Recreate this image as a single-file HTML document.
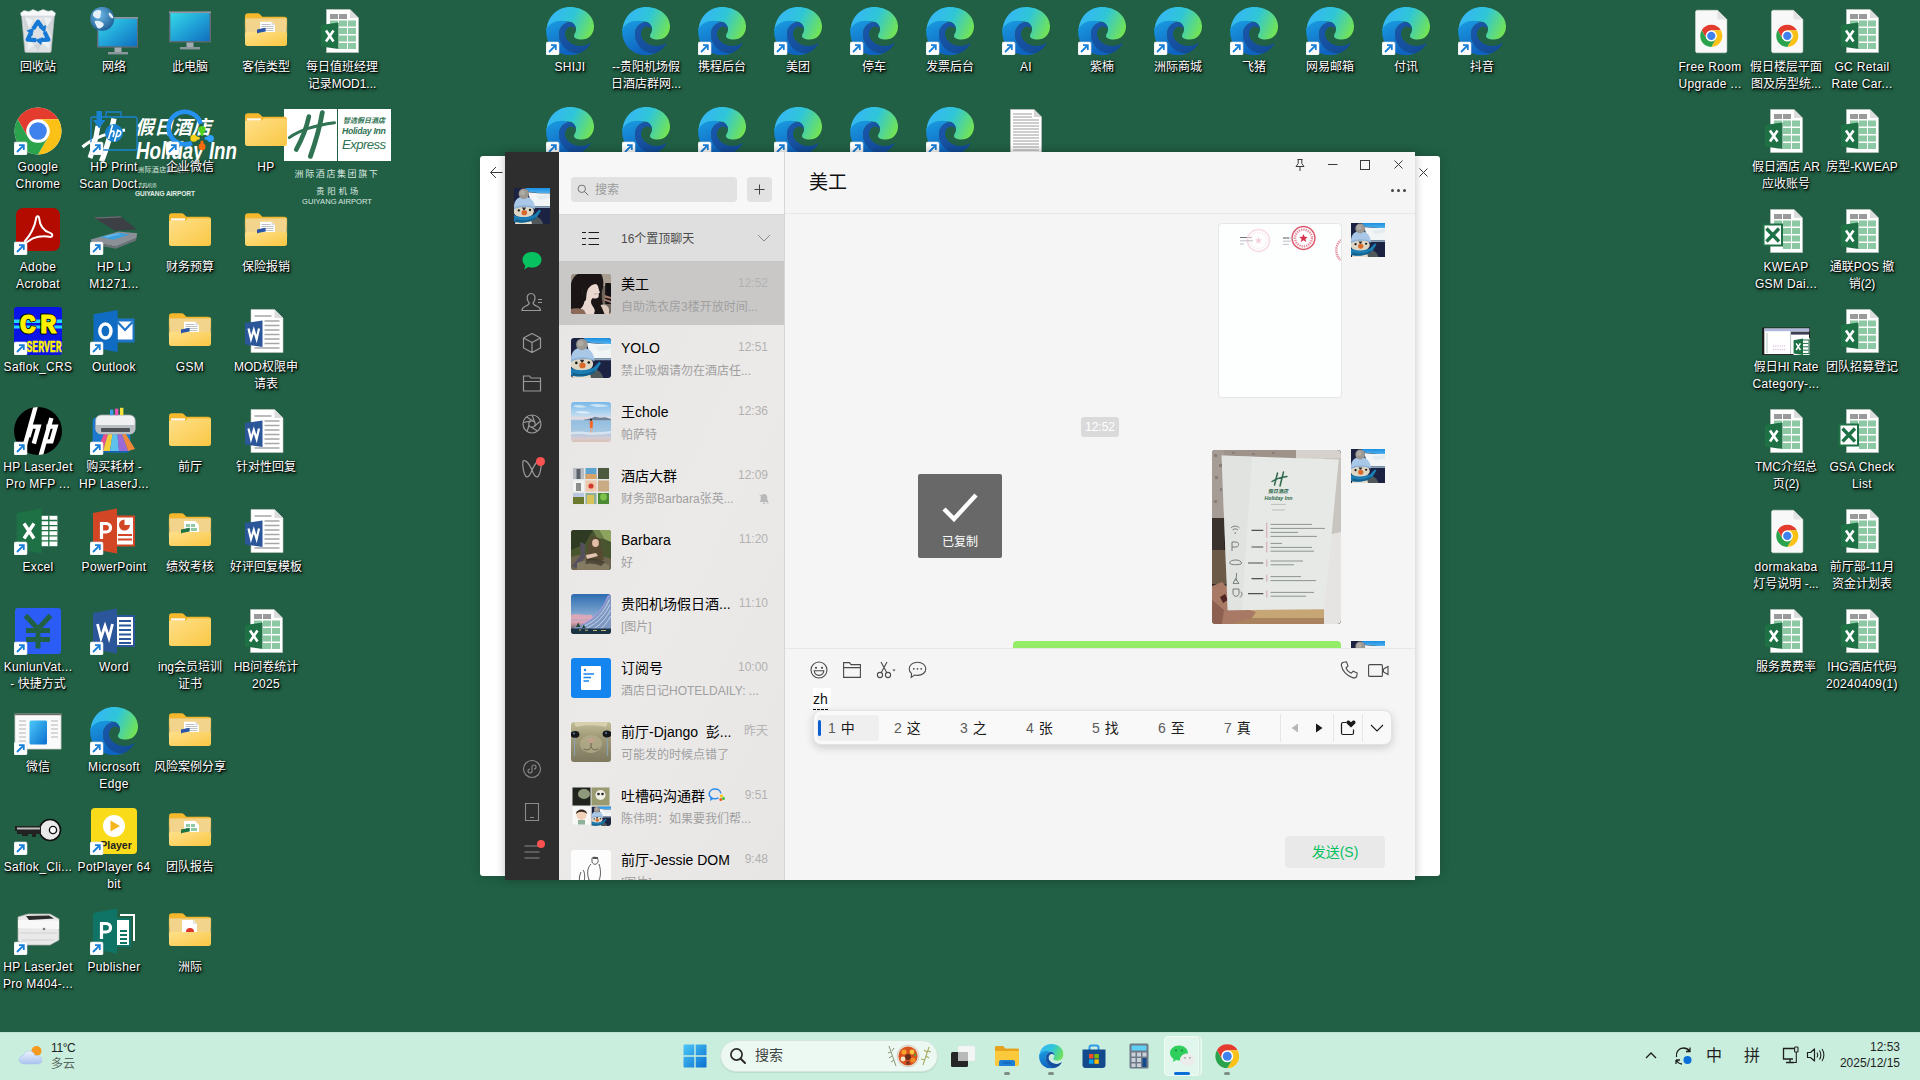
<!DOCTYPE html><html lang="zh-CN"><head><meta charset="utf-8"><title>Desktop</title><style>
*{box-sizing:border-box;margin:0;padding:0}
html,body{width:1920px;height:1080px;overflow:hidden}
body{background:#216045;font-family:"Liberation Sans","Noto Sans CJK SC",sans-serif;position:relative}
.ic{position:absolute;width:76px;height:100px}
.ic svg{position:absolute;left:14px;top:7px;width:48px;height:48px;overflow:visible}
.ic .lb{position:absolute;left:-22px;width:120px;top:59px;text-align:center;color:#fff;font-size:12px;line-height:17px;white-space:nowrap;text-shadow:1px 1px 1px rgba(0,0,0,.9),1px 2px 3px rgba(0,0,0,.85),0 0 3px rgba(0,0,0,.7)}
.abs{position:absolute}
#taskbar{position:absolute;left:0;top:1032px;width:1920px;height:48px;background:#c9eede;box-shadow:inset 0 1px 0 #bfe3d2}
.wp{position:absolute;color:#e9f1ec;white-space:nowrap}
.la{letter-spacing:.35px}

#backwin{position:absolute;left:480px;top:156px;width:960px;height:720px;background:#fff;border-radius:3px;box-shadow:0 0 12px rgba(0,0,0,.2)}
#wx{position:absolute;left:505px;top:152px;width:910px;height:728px;background:#f5f5f5;box-shadow:0 0 9px rgba(0,0,0,.25);overflow:hidden}
#wx .side{position:absolute;left:0;top:0;width:54px;height:728px;background:#2e2e2e}
#wx .list{position:absolute;left:54px;top:0;width:226px;height:728px;background:linear-gradient(115deg,#e6e5e4 0%,#eceae9 55%,#e7e6e5 100%);border-right:1px solid #d6d6d6;overflow:hidden}
#wx .lhead{position:absolute;left:0;top:0;width:225px;height:62px;background:#f7f7f7}
#wx .srch{position:absolute;left:12px;top:25px;width:166px;height:25px;border-radius:4px;background:#e2e2e2}
#wx .plus{position:absolute;left:188px;top:25px;width:25px;height:25px;border-radius:4px;background:#e2e2e2}
#wx .pin{position:absolute;left:0;top:62px;width:225px;height:47px;background:#dfdfdf;border-top:1px solid #d4d4d4}
.row{position:absolute;left:0;width:225px;height:64px}
.row svg.av{position:absolute;left:12px;top:13px;width:40px;height:40px;border-radius:3px}
.row .nm{position:absolute;left:62px;top:12px;font-size:14px;line-height:22px;color:#000;white-space:nowrap}
.row .pv{position:absolute;left:62px;top:36px;font-size:12px;line-height:20px;color:#a0a0a0;white-space:nowrap}
.row .tm{position:absolute;right:16px;top:12px;font-size:12px;line-height:20px;color:#b2b2b2;white-space:nowrap}
#wx .chat{position:absolute;left:280px;top:0;width:630px;height:728px;background:#f5f5f5}
.sico{position:absolute;left:15px;width:24px;height:24px}
.cand{position:absolute;top:7px;font-size:14px;line-height:20px;color:#1a1a1a;white-space:nowrap}
.cand i{font-style:normal;color:#5c5c5c;margin-right:5px}

</style></head><body>
<svg width="0" height="0" style="position:absolute">
<defs>
<linearGradient id="gEdgeTop" x1="0.1" y1="0.3" x2="1" y2="0.6"><stop offset="0" stop-color="#35b8f1"/><stop offset="0.45" stop-color="#2fc6d8"/><stop offset="1" stop-color="#72e356"/></linearGradient>
<linearGradient id="gEdgeMid" x1="0" y1="0" x2="0.4" y2="1"><stop offset="0" stop-color="#1b9de2"/><stop offset="1" stop-color="#0e64c0"/></linearGradient>
<linearGradient id="gEdgeLow" x1="0" y1="0" x2="1" y2="1"><stop offset="0" stop-color="#1a57ad"/><stop offset="1" stop-color="#114a94"/></linearGradient>
<linearGradient id="gFold" x1="0" y1="0" x2="1" y2="1"><stop offset="0" stop-color="#ffe08a"/><stop offset="1" stop-color="#f9c744"/></linearGradient>
<linearGradient id="gMon" x1="0" y1="0" x2="1" y2="1"><stop offset="0" stop-color="#36dbe9"/><stop offset="0.5" stop-color="#21a4d8"/><stop offset="1" stop-color="#0f6cbd"/></linearGradient><radialGradient id="gGlobe" cx="0.4" cy="0.35" r="0.7"><stop offset="0" stop-color="#6db8e4"/><stop offset="1" stop-color="#1d5c96"/></radialGradient>
<linearGradient id="gWin" x1="0" y1="0" x2="1" y2="1"><stop offset="0" stop-color="#4cc8f8"/><stop offset="1" stop-color="#0a6fd0"/></linearGradient>

<symbol id="edge" viewBox="0 0 48 48">
<path fill="url(#gEdgeTop)" d="M0.5 24 C1 10 11 0 24 0 C38 0 48 9 48 19.5 C48 28 42 32.5 35.5 32.5 C31 32.5 28 31 28 29 C28 27 30 26 30 22.5 C30 18 26.5 14.5 22 14.5 C13 14.5 5 18 0.5 24Z"/>
<path fill="url(#gEdgeMid)" d="M0.3 22 C-1 37 10 48 24 48 C28 48 31 47.3 33.5 46.2 C23 46 13 38 13 27 C13 21 17 16.5 22.5 15 C14 11.5 3.5 15 0.3 22Z"/>
<path fill="url(#gEdgeLow)" d="M13 27 C13 40 24 47.5 33.5 46.2 C39 44 43 40 45 35.5 C42 38 38 39 34.5 39 C26 39 19 33 19 27 C19 22.5 22 19.5 25 19.5 C27.5 19.5 29.3 20.7 30 22.5 C30 18 26.5 14.6 22.5 15 C17 16.5 13 21 13 27Z"/>
</symbol>

<symbol id="sc" viewBox="0 0 48 48">
<rect x="0" y="35" width="13" height="13" rx="1.5" fill="#fff" stroke="#d8dde2" stroke-width="0.6"/>
<path d="M3 45 L9.5 38.5 M5 38.2 H9.8 V43" fill="none" stroke="#1a7fd6" stroke-width="1.8"/>
</symbol>

<symbol id="folder" viewBox="0 0 48 48">
<path fill="#f5b72b" d="M3 9 C3 7.2 4.2 6.2 6 6.2 H15 C16.5 6.2 17.3 6.6 18.2 7.6 L20.3 9.8 H42 C44 9.8 45 10.8 45 12.6 V20 H3Z"/>
<rect x="5" y="11.3" width="14" height="2.4" fill="#fff" opacity="0.9"/>
<path fill="url(#gFold)" d="M3 13.8 H19.5 L22 11.4 H43 C44.3 11.4 45 12.2 45 13.4 V36.5 C45 38.2 44 39 42.5 39 H5.5 C4 39 3 38.2 3 36.5Z"/>
</symbol>

<symbol id="folderdoc" viewBox="0 0 48 48">
<path fill="#f5b72b" d="M3 9 C3 7.2 4.2 6.2 6 6.2 H15 C16.5 6.2 17.3 6.6 18.2 7.6 L20.3 9.8 H42 C44 9.8 45 10.8 45 12.6 V20 H3Z"/>
<path fill="#f3d48c" stroke="#e9bf62" stroke-width="0.6" d="M3.3 11.3 H44.7 V30 H3.3Z"/>
<path fill="#fff" d="M18 14.8 H29.5 L33 18.3 V30 H18Z"/><path fill="#d9dde3" d="M29.5 14.8 V18.3 H33Z"/>
<path stroke="#b4bac2" stroke-width="0.9" d="M19.5 17.5H28.5M19.5 19.5H31.5M19.5 21.5H31.5M19.5 23.5H31.5"/>
<path fill="url(#gFold)" d="M3 27 C3 25.8 3.8 25 5 25 H43 C44.2 25 45 25.8 45 27 V36.5 C45 38.2 44 39 42.5 39 H5.5 C4 39 3 38.2 3 36.5Z"/>
<path fill="#2a56a5" d="M15 22.4 L23.6 20.8 V24.6 L17 25.8 L15 26.4Z"/>
</symbol>

<symbol id="folderxls" viewBox="0 0 48 48">
<path fill="#f5b72b" d="M3 9 C3 7.2 4.2 6.2 6 6.2 H15 C16.5 6.2 17.3 6.6 18.2 7.6 L20.3 9.8 H42 C44 9.8 45 10.8 45 12.6 V20 H3Z"/>
<path fill="#f3d48c" stroke="#e9bf62" stroke-width="0.6" d="M3.3 11.3 H44.7 V30 H3.3Z"/>
<path fill="#fff" d="M18 14 H29 L33 18 V30 H18Z"/>
<path fill="#8fcaa4" d="M20 17h4v3h-4zM25 17h4v3h-4zM20 21h4v3h-4zM25 21h6v3h-6z"/>
<path fill="url(#gFold)" d="M3 27 C3 25.8 3.8 25 5 25 H43 C44.2 25 45 25.8 45 27 V36.5 C45 38.2 44 39 42.5 39 H5.5 C4 39 3 38.2 3 36.5Z"/>
<path fill="#1f7244" d="M15 22.4 L23.6 20.8 V24.6 L17 25.8 L15 26.4Z"/>
</symbol>

<symbol id="folderpdf" viewBox="0 0 48 48">
<path fill="#f5b72b" d="M3 9 C3 7.2 4.2 6.2 6 6.2 H15 C16.5 6.2 17.3 6.6 18.2 7.6 L20.3 9.8 H42 C44 9.8 45 10.8 45 12.6 V20 H3Z"/>
<path fill="#f3d48c" stroke="#e9bf62" stroke-width="0.6" d="M3.3 11.3 H44.7 V30 H3.3Z"/>
<path fill="#fff" d="M16 13 H27 L31 17 V30 H16Z"/><path fill="#e3e3e3" d="M27 13 V17 H31Z"/>
<circle cx="24" cy="25" r="4" fill="#e0352b"/>
<path fill="url(#gFold)" d="M3 27 C3 25.8 3.8 25 5 25 H43 C44.2 25 45 25.8 45 27 V36.5 C45 38.2 44 39 42.5 39 H5.5 C4 39 3 38.2 3 36.5Z"/>
</symbol>

<symbol id="xlsx" viewBox="0 0 48 48">
<g transform="translate(-2 0)">
<path fill="#fff" stroke="#c8c8c8" stroke-width="0.6" d="M10.5 2.5 H34 L42.5 11 V45.5 H10.5Z"/>
<path fill="#dcdcdc" d="M34 2.5 V11 H42.5Z"/>
<path fill="#9a9a9a" d="M14 7h8v5h-8zM23 7h8v5h-8z"/>
<path fill="#8dc8a5" d="M14 13.5h8v6h-8zM23 13.5h8v6h-8zM32 13.5h8v6h-8zM23 21h8v6h-8zM32 21h8v6h-8zM23 28.5h8v6h-8zM32 28.5h8v6h-8zM23 36h8v6h-8zM32 36h8v6h-8z"/>
</g>
<path fill="#1e7145" d="M3 18 L20.5 15.5 V42 L3 39.5Z"/>
<path d="M8 23.5 L15.5 34.5 M15.5 23.5 L8 34.5" stroke="#fff" stroke-width="2.6" fill="none"/>
</symbol>

<symbol id="xls" viewBox="0 0 48 48">
<g transform="translate(-2 0)">
<path fill="#fff" stroke="#c8c8c8" stroke-width="0.6" d="M10.5 2.5 H34 L42.5 11 V45.5 H10.5Z"/>
<path fill="#dcdcdc" d="M34 2.5 V11 H42.5Z"/>
<path fill="#9a9a9a" d="M14 7h8v5h-8zM23 7h8v5h-8z"/>
<path fill="#8dc8a5" d="M14 13.5h8v6h-8zM23 13.5h8v6h-8zM32 13.5h8v6h-8zM23 21h8v6h-8zM32 21h8v6h-8zM23 28.5h8v6h-8zM32 28.5h8v6h-8zM23 36h8v6h-8zM32 36h8v6h-8z"/>
</g>
<rect x="1.5" y="17.5" width="18.5" height="21" fill="#fff" stroke="#1e7145" stroke-width="2"/>
<path d="M4.5 21.5 L17 34.5 M17 21.5 L4.5 34.5" stroke="#1e7145" stroke-width="3.4" fill="none"/>
</symbol>

<symbol id="docx" viewBox="0 0 48 48">
<g transform="translate(-1.5 0)">
<path fill="#fff" stroke="#c8c8c8" stroke-width="0.6" d="M10.5 2.5 H34 L42.5 11 V45.5 H10.5Z"/>
<path fill="#dcdcdc" d="M34 2.5 V11 H42.5Z"/>
<path stroke="#a6a6a6" stroke-width="1.6" d="M14 9H31M24 14H39M24 18.5H39M24 23H39M24 27.5H39M24 32H39M24 36.5H39M14 41H39"/>
</g>
<path fill="#2b569a" d="M3 16 L20.5 13.5 V40 L3 37.5Z"/>
<path d="M6.5 21.5 L9 32 L11.8 23 L14.6 32 L17 21.5" stroke="#fff" stroke-width="2.2" fill="none" stroke-linejoin="miter"/>
</symbol>

<symbol id="txt" viewBox="0 0 48 48">
<path fill="#fff" stroke="#bdbdbd" stroke-width="0.8" d="M8.5 2.5 H32 L39.5 10 V45.5 H8.5Z"/>
<path fill="#d4d4d4" d="M32 2.5 V10 H39.5Z"/>
<path stroke="#9c9c9c" stroke-width="1" d="M11 7H30M11 10H30M11 13H37M11 16H37M11 19H37M11 22H37M11 25H37M11 28H37M11 31H37M11 34H37M11 37H37M11 40H37M11 43H37"/>
</symbol>

<symbol id="chrome" viewBox="0 0 48 48">
<circle cx="24" cy="24" r="23.5" fill="#fff"/>
<path fill="#e33b2e" d="M24 0.5 A23.5 23.5 0 0 1 44.35 12.25 H24 A11.75 11.75 0 0 0 13.82 29.9 L3.65 12.25 A23.5 23.5 0 0 1 24 0.5Z"/>
<path fill="#fbc116" d="M44.35 12.25 A23.5 23.5 0 0 1 24 47.5 L34.18 29.9 A11.75 11.75 0 0 0 24 12.25Z"/>
<path fill="#2ba24c" d="M24 47.5 A23.5 23.5 0 0 1 3.65 12.25 L13.82 29.9 A11.75 11.75 0 0 0 34.18 29.9Z"/>
<circle cx="24" cy="24" r="11" fill="#fff"/>
<circle cx="24" cy="24" r="8.8" fill="#3f82ee"/>
</symbol>

<symbol id="chromedoc" viewBox="0 0 48 48">
<g transform="translate(-2.5 0)"><path fill="#f8f8f8" stroke="#dedede" stroke-width="0.5" d="M12 5 C12 4 12.8 3.2 13.8 3.2 H34 L43.4 12.6 V44 C43.4 45 42.6 45.8 41.6 45.8 H13.8 C12.8 45.8 12 45 12 44Z"/>
<path fill="#e2e2e2" d="M34 3.2 V10.8 C34 11.8 34.7 12.6 35.7 12.6 H43.4Z"/></g>
<g transform="translate(14 17.6) scale(0.47)">
<circle cx="24" cy="24" r="23.5" fill="#fff"/>
<path fill="#e33b2e" d="M24 0.5 A23.5 23.5 0 0 1 44.35 12.25 H24 A11.75 11.75 0 0 0 13.82 29.9 L3.65 12.25 A23.5 23.5 0 0 1 24 0.5Z"/>
<path fill="#fbc116" d="M44.35 12.25 A23.5 23.5 0 0 1 24 47.5 L34.18 29.9 A11.75 11.75 0 0 0 24 12.25Z"/>
<path fill="#2ba24c" d="M24 47.5 A23.5 23.5 0 0 1 3.65 12.25 L13.82 29.9 A11.75 11.75 0 0 0 34.18 29.9Z"/>
<circle cx="24" cy="24" r="11" fill="#fff"/>
<circle cx="24" cy="24" r="8.8" fill="#3f82ee"/>
</g>
</symbol>

<symbol id="recycle" viewBox="0 0 48 48">
<path fill="#dde1e4" stroke="#a9b0b6" stroke-width="0.7" d="M7.5 7.5 L40.5 7.5 L37.2 44 C37.1 45 36.4 45.5 35.4 45.5 H12.6 C11.6 45.5 10.9 45 10.8 44Z"/>
<path fill="#f6f8f9" d="M6.5 6 L10 3.5 L15 4.5 L19 2.5 L24 4.5 L29 2.5 L34 4.2 L38 3.5 L41.5 6 L40.8 9 H7.2Z" stroke="#c5cbd0" stroke-width="0.5"/>
<path fill="#f3f5f6" opacity="0.8" d="M11 10 L19 13 L15 22Z M30 10 L38 12 L33 20Z M13 30 L20 38 L14 43Z M28 36 L36 30 L35 42Z M20 12 L28 11 L24 18Z"/>
<path fill="#c9cfd4" opacity="0.7" d="M9 9 L11 10 L15 22 L11 24Z M38 12 L40 9 L37.5 28 L33 20Z M20 38 L28 36 L24 44Z"/>
<g fill="#1478d4" stroke="#1478d4">
<g id="rcA"><path d="M19.2 21.8 L24 14.6 L27.6 20" fill="none" stroke-width="4.2" stroke-linejoin="round"/><path d="M25.2 20.6 L32 18.6 L30.8 25.4Z" stroke-width="0.6"/></g>
<use href="#rcA" transform="rotate(120 24 26.6)"/><use href="#rcA" transform="rotate(240 24 26.6)"/>
</g>
</symbol>

<symbol id="thispc" viewBox="0 0 48 48">
<rect x="3.7" y="5.2" width="40.6" height="29.6" fill="url(#gMon)" stroke="#5f6a73" stroke-width="1.4"/>
<rect x="3" y="4.5" width="42" height="1.6" fill="#8d979f"/>
<rect x="20.5" y="35.5" width="7" height="5" fill="#a3abb2"/>
<rect x="14" y="40" width="20" height="2.4" fill="#8d969d"/>
</symbol>

<symbol id="network" viewBox="0 0 48 48">
<rect x="7.7" y="10.7" width="40" height="29.3" fill="url(#gMon)" stroke="#5f6a73" stroke-width="1.4"/>
<rect x="7" y="10" width="41.4" height="1.6" fill="#8d979f"/>
<rect x="24.5" y="40.5" width="7" height="5" fill="#a3abb2"/>
<rect x="18" y="45" width="20" height="2.4" fill="#8d969d"/>
<circle cx="12.2" cy="11.8" r="12" fill="url(#gGlobe)"/>
<path fill="#e4f1f8" d="M5 4 C7 2.5 10 2.5 11 4 C12 6 10 7 10.5 9 C11 11 8 12.5 6 11 C4 10 2.5 8.5 3 7 C3.3 5.6 4 4.8 5 4Z M5 14 C8 13 12 14.5 13.5 16.5 C14.5 18.5 12 20.5 10 21.5 C8 22 6.5 20 6 18 C5.5 16.5 4 15 5 14Z M19 5.5 C21 6 23 8.5 23.5 11 C22 12 20 10.5 19.5 9 C19 8 18 6.5 19 5.5Z"/>
</symbol>

<symbol id="acrobat" viewBox="0 0 48 48">
<rect x="2" y="1" width="44" height="43" rx="7" fill="#b30b00"/>
<path fill="none" stroke="#fff" stroke-width="2" stroke-linejoin="round" d="M11.8 33 C16.5 28 21 19 22 12 C22.4 8.6 25 8.4 25.2 11.6 C25.6 18 29.5 23.8 35.5 25.6 C39.4 26.8 39 30.6 35.4 29.8 C28.5 28.2 19.5 30 14.6 34 C11.6 36.6 9.6 35.4 11.8 33Z"/>
</symbol>

<symbol id="scanner" viewBox="0 0 48 48">
<path fill="#3c4044" d="M3.5 10.4 L30.4 9.2 L46.8 22.4 L25 23.8Z"/>
<path fill="#6a6f75" d="M3.5 10.4 L30.4 9.2 L32 10.4 L7 11.6Z"/>
<path fill="#8a9096" d="M0.8 32.6 L28.5 24.4 L47.2 26.2 L46.4 31 L25.8 39.4 L1.6 34.8Z"/>
<path fill="#6d7379" d="M1.6 34.8 L25.8 39.4 L46.4 31 L46 33.4 L25.8 41.8 L2 37Z"/>
<path fill="#3aa0e0" d="M10 30 L28.5 25.8 L39.6 27.4 L23 32.8Z"/>
<path fill="#8fd0f4" d="M14 29.6 L28 26.6 L31 27 L17 30.4Z" opacity="0.6"/>
</symbol>

<symbol id="saflokcrs" viewBox="0 0 48 48">
<rect x="0" y="0" width="48" height="48" rx="3" fill="#0a14e6"/>
<path fill="#22d6ff" d="M0 12.5h48v3.4H0zM0 18.5h48v3H0z"/>
<text x="26" y="25.5" text-anchor="middle" font-family="Liberation Mono, monospace" font-weight="bold" font-size="27" fill="#000" stroke="#000" stroke-width="2.8" stroke-linejoin="round" letter-spacing="4">CR</text>
<text x="26" y="25.5" text-anchor="middle" font-family="Liberation Mono, monospace" font-weight="bold" font-size="27" fill="#fff200" stroke="#fff200" stroke-width="1.2" stroke-linejoin="round" letter-spacing="4">CR</text>
<text x="30" y="44.5" text-anchor="middle" font-family="Liberation Mono, monospace" font-weight="bold" font-size="16" fill="#fff200" stroke="#fff200" stroke-width="0.5" textLength="35" lengthAdjust="spacingAndGlyphs">SERVER</text>
</symbol>

<symbol id="outlook" viewBox="0 0 48 48">
<rect x="24" y="11.5" width="20.5" height="24" fill="#1e74c8"/>
<path fill="#fff" d="M27.5 14.5 H42.5 V32.5 H27.5Z"/>
<path fill="none" stroke="#1e74c8" stroke-width="2.2" d="M27.5 15 L35 23 L42.5 15"/>
<path fill="#0f6cc2" d="M3.5 7.2 L27.6 3 V45 L3.5 40.8Z"/>
<ellipse cx="15.4" cy="24" rx="5.6" ry="7" fill="none" stroke="#fff" stroke-width="3.4"/>
</symbol>

<symbol id="hp" viewBox="0 0 48 48">
<clipPath id="hpclip"><circle cx="24" cy="24" r="24"/></clipPath>
<circle cx="24" cy="24" r="24" fill="#000"/>
<g fill="none" stroke="#fff" stroke-width="4.4" clip-path="url(#hpclip)" stroke-linejoin="miter">
<path d="M21.8 -1 L8.4 47"/>
<path d="M14.4 30 L17.4 19.6 H24.6 L19.8 36.6"/>
<path d="M37.4 11 L26.6 49"/>
<path d="M32.4 19.6 H41.6 L37.4 34.4 H29.4"/>
</g>
</symbol>

<symbol id="printcolor" viewBox="0 0 48 48">
<rect x="2.6" y="10.6" width="37.6" height="34.8" rx="4" fill="#1d79d0"/>
<path fill="#1562b4" d="M2.6 36 H40.2 V41.4 C40.2 43.6 38.4 45.4 36.2 45.4 H6.6 C4.4 45.4 2.6 43.6 2.6 41.4Z"/>
<path fill="#e8508f" d="M15 24 L19 24 L13 44 L7 44Z"/><path fill="#f4cf3a" d="M19 24 L23 24 L20 44 L13 44Z"/><path fill="#5fc0ec" d="M23 24 L27 24 L29 44 L20 44Z"/><path fill="#9a6ad6" d="M27 24 L31 24 L38 44 L29 44Z"/><path fill="#f08a3a" d="M31 24 L34 24 L45 42 L38 44Z"/>
<rect x="5.6" y="8" width="39.6" height="19" rx="5.5" fill="#eef0f1" stroke="#9ea4a9" stroke-width="0.8"/>
<path fill="#b9bec2" d="M6 18 H44.8 V22 C44.8 25 42.6 27 39.6 27 H11.2 C8.2 27 6 25 6 22Z"/>
<rect x="11" y="21" width="29" height="4" rx="1" fill="#4d5359"/>
<rect x="20" y="2.6" width="3.4" height="5.6" fill="#3a9be8"/><rect x="25" y="1.6" width="3.4" height="6.6" fill="#e650b0"/><rect x="30" y="0.8" width="3.4" height="7.4" fill="#f3e23a"/>
</symbol>

<symbol id="excelapp" viewBox="0 0 48 48">
<rect x="26" y="8.8" width="17.4" height="30.4" fill="#fff"/>
<path stroke="#1e7145" stroke-width="1.3" d="M27 13.5H43.4M27 18.6H43.4M27 23.7H43.4M27 28.8H43.4M27 33.9H43.4M34.8 8.8V39.2"/>
<path fill="#1e7145" d="M2.7 6 L27.7 1.5 V46.5 L2.7 42Z"/>
<path d="M10 16.5 L20 31.5 M20 16.5 L10 31.5" stroke="#fff" stroke-width="3.4" fill="none"/>
</symbol>

<symbol id="pptapp" viewBox="0 0 48 48">
<rect x="25" y="9.5" width="19" height="29" fill="#fff" stroke="#d24625" stroke-width="2"/>
<circle cx="34.5" cy="18" r="5.5" fill="#d24625"/><path fill="#fff" d="M34.5 18 V11 A7 7 0 0 1 41.5 18Z"/>
<path stroke="#d24625" stroke-width="2" d="M28 28H42M28 32.5H42"/>
<path fill="#d24625" d="M3 6 L27 1.5 V46.5 L3 42Z"/>
<path d="M11.5 32 V16.5 H16 C22 16.5 22 25 16 25 H11.5" stroke="#fff" stroke-width="3.2" fill="none"/>
</symbol>

<symbol id="wordapp" viewBox="0 0 48 48">
<rect x="24" y="9" width="20" height="30" fill="#fff" stroke="#2b569a" stroke-width="2"/>
<path stroke="#2b569a" stroke-width="2" d="M29 14H41M29 18.5H41M29 23H41M29 27.5H41M29 32H41M29 36H41"/>
<path fill="#2b569a" d="M3 6 L27 1.5 V46.5 L3 42Z"/>
<path d="M7.5 17 L11 31 L15 19 L19 31 L22.5 17" stroke="#fff" stroke-width="2.8" fill="none"/>
</symbol>

<symbol id="pubapp" viewBox="0 0 48 48">
<path fill="none" stroke="#fff" stroke-width="2" d="M30 8 H44 V34"/>
<rect x="24" y="12" width="16" height="27" fill="#fff" stroke="#0f7466" stroke-width="2"/>
<path stroke="#0f7466" stroke-width="2" d="M30 24H37M30 28H37M30 32H37M30 36H37"/>
<path fill="#0f7466" d="M3 6 L27 1.5 V46.5 L3 42Z"/>
<path d="M11.5 32 V16.5 H16 C22 16.5 22 25 16 25 H11.5" stroke="#fff" stroke-width="3.2" fill="none"/>
</symbol>

<symbol id="kunlun" viewBox="0 0 48 48">
<rect x="1" y="1" width="46" height="46" rx="3" fill="#2b5cf6"/>
<path fill="none" stroke="#226046" stroke-width="5" d="M11.5 8.5 L24 22 L36.5 8.5 M24 22 V41.5 M12 23.5 H36 M12 32.5 H36"/>
</symbol>

<symbol id="wechatthumb" viewBox="0 0 48 48">
<rect x="1" y="7" width="46" height="35" fill="#fafafa" stroke="#cfcfcf" stroke-width="0.8"/><rect x="0.6" y="6.6" width="46.8" height="1.6" fill="#6e6a68"/>
<rect x="15.5" y="13.5" width="17.5" height="24" rx="1.5" fill="url(#gWin)"/>
<path stroke="#b5b5b5" stroke-width="1" d="M5 14H12M5 18H12M5 22H12M5 26H12M5 30H12M5 34H12M37 14H44M37 18H44M37 22H44M37 26H44M37 30H44"/>
</symbol>

<symbol id="key" viewBox="0 0 48 48">
<circle cx="36" cy="23" r="10.5" fill="#e9e9e9" stroke="#111" stroke-width="1.6"/>
<circle cx="39" cy="23" r="3.6" fill="#fff" stroke="#111" stroke-width="1.4"/>
<path fill="#222" d="M1 19 H27 V27 H22 V30 H18 V27 H14 V29 H8 V27 H3 V24 H1Z"/>
<path fill="#bdbdbd" d="M3 20.5 H26 V22.5 H3Z"/>
</symbol>

<symbol id="potplayer" viewBox="0 0 48 48">
<rect x="1" y="1" width="46" height="46" rx="4" fill="#f9db1a"/>
<circle cx="24" cy="19" r="11" fill="#fff"/>
<path fill="#f4b61c" d="M20.5 13.5 L30 19 L20.5 24.5Z"/>
<text x="26" y="42" text-anchor="middle" font-family="Liberation Sans, sans-serif" font-weight="bold" font-size="10.5" fill="#222">Player</text>
</symbol>

<symbol id="laserjet" viewBox="0 0 48 48">
<path fill="#e9e9e9" stroke="#b3b3b3" stroke-width="0.7" d="M4 10 L14 7 H36 L45 12 V33 L36 38 H10 L4 34Z"/>
<path fill="#2a2a2a" d="M12 9 L35 8.5 L40 11.5 L15 13Z"/>
<path fill="#f8f8f8" d="M4 13 L45 13.5 V22 L4 21Z"/>
<path stroke="#c9c9c9" stroke-width="0.8" d="M6 26 H43M8 33 H40"/>
<circle cx="30" cy="22" r="1.3" fill="#7d7d7d"/>
</symbol>

<symbol id="hpscan" viewBox="0 0 48 48">
<rect x="1" y="10" width="46" height="33" rx="2" fill="none" stroke="#1a83d1" stroke-width="1.3"/>
<path fill="none" stroke="#1a83d1" stroke-width="1.3" d="M16 10 V5 H31 V10"/>
<path fill="#1a83d1" d="M6.5 4 H12 V13 H15.5 L9.2 21.5 L3 13 H6.5Z"/>
<circle cx="24" cy="26" r="9" fill="#1a83d1"/>
<path fill="none" stroke="#fff" stroke-width="1.6" d="M22.5 18 L18.5 32 M20.5 26 C22 23 24.5 23.5 24 26 L23 30 M28 22.5 L24.5 34.5 M27 25 C29 23 31.5 24 30.5 27 C29.5 29.5 27.5 30 26.5 29"/>
</symbol>

<symbol id="wecom" viewBox="0 0 48 48">
<path fill="none" stroke="#2592f2" stroke-width="4.6" d="M34.7 16.8 A16.3 16.3 0 1 0 25.9 35.8"/>
<path fill="#2592f2" d="M6 33 L4.5 41.5 L13 38.5Z"/>
<g stroke-linecap="round" stroke-width="3">
<path stroke="#4fd11f" d="M36 22.8 L36 27.5"/><path stroke="#2ea1ff" d="M44.5 31.5 L40 31.3"/><path stroke="#fbd11a" d="M27.8 31.2 L32.4 31.3"/><path stroke="#fb6a0d" d="M36 39.7 L36 35"/>
</g>
<circle cx="36" cy="22.6" r="3.5" fill="#4fd11f"/><circle cx="44.4" cy="31.4" r="3.5" fill="#2ea1ff"/><circle cx="27.8" cy="31.2" r="3.5" fill="#fbd11a"/><circle cx="36" cy="39.8" r="3.5" fill="#fb6a0d"/>
</symbol>

<symbol id="thumbxls" viewBox="0 0 48 48">
<rect x="0.5" y="21" width="47" height="26.6" fill="#fff" stroke="#1c1c1c" stroke-width="1"/>
<rect x="0.5" y="21" width="1.8" height="26.6" fill="#1c1c1c"/>
<rect x="2" y="21.6" width="45.4" height="2.6" fill="#aeb9dc"/>
<rect x="29" y="24.6" width="18.4" height="3" fill="#3a3f52"/>
<path stroke="#9aa" stroke-width="0.7" d="M5 26V46M28.6 24V47"/>
<path stroke="#c9a0d0" stroke-width="0.8" stroke-dasharray="1.2 1" d="M11 39H23M11 42.4H23"/>
<rect x="31.6" y="31" width="16" height="17" fill="#fff"/>
<rect x="40" y="33" width="7" height="13.6" fill="#fff" stroke="#1e7145" stroke-width="1"/>
<path stroke="#1e7145" stroke-width="1" d="M41 36.4H46.4M41 39.8H46.4M41 43.2H46.4"/>
<path fill="#1e7145" d="M31.6 33.2 L41 31.4 V48 L31.6 46.4Z"/>
<path d="M34.2 36.4 L38.4 43 M38.4 36.4 L34.2 43" stroke="#fff" stroke-width="1.5"/>
</symbol>
</defs>
</svg>

<svg width="0" height="0" style="position:absolute"><defs>
<linearGradient id="gSky" x1="0" y1="0" x2="0" y2="1"><stop offset="0" stop-color="#1a8fe2"/><stop offset="1" stop-color="#55b3ec"/></linearGradient>
<linearGradient id="gBeach" x1="0" y1="0" x2="0" y2="1"><stop offset="0" stop-color="#79b8e8"/><stop offset="0.3" stop-color="#b4d7f0"/><stop offset="0.42" stop-color="#e9dde2"/><stop offset="0.47" stop-color="#94bfe0"/><stop offset="0.78" stop-color="#a9c9e2"/><stop offset="0.9" stop-color="#d6ccd2"/><stop offset="1" stop-color="#d9c0b4"/></linearGradient>
<linearGradient id="gDusk" x1="0" y1="0" x2="0" y2="1"><stop offset="0" stop-color="#2c6cb0"/><stop offset="0.5" stop-color="#7fa6cf"/><stop offset="0.7" stop-color="#e0a6b4"/><stop offset="1" stop-color="#1f3b46"/></linearGradient>
<symbol id="penguin" viewBox="0 0 36 36">
<rect width="36" height="36" fill="#1c2242"/>
<path fill="url(#gSky)" d="M11 0 H36 V5.6 L24 5 L15 4Z"/>
<path fill="#f1f5f6" d="M14 4.2 L24 5.2 L36 5.4 V18.2 H18Z"/>
<path fill="#dfe8ee" d="M22 8 L36 6 V10 L26 12Z" opacity="0.7"/>
<path fill="#8aa3b8" d="M18 18.2 H36 V20 H20Z"/>
<path fill="#50585a" d="M18 28 C24 28 28 31 29 36 H10Z"/>
<ellipse cx="9.7" cy="23.2" rx="10.2" ry="6.8" fill="#ddd6c5"/>
<path fill="#e6dfd0" d="M2 32 C6 30 14 30 17 32 L18 36 H1Z"/>
<path fill="#a9c7e6" d="M0 19.5 C0 12 4 8.5 10 8.5 C16 8.5 21 13 21 20.5 C16 17.2 5 17.6 0 21Z"/>
<path fill="#8fb2d6" d="M0 19.5 C5 16.6 16 16.4 21 19.6 L21 21 C16 18 5 18.2 0 21.5Z"/>
<circle cx="9.8" cy="5.8" r="5.2" fill="#9b9792"/><circle cx="8.6" cy="4.8" r="2.6" fill="#aeaaa4"/>
<path fill="#2a2a2a" d="M8 19.5 L12 19.5 L10.6 22 L9.4 22Z"/>
<circle cx="4.8" cy="22.4" r="1.15" fill="#151515"/><circle cx="16" cy="22" r="1.15" fill="#151515"/>
<ellipse cx="10.3" cy="24.7" rx="2.8" ry="2.6" fill="#d8692a"/>
<path fill="#1b7db3" d="M0 27 C6 30 15 29.5 20.5 26.4 L25.4 21.4 L27 22.8 L23 29 C18 34.5 6 36 0 33.5Z"/>
<path fill="#14608c" d="M2 31 C8 33.5 16 32.5 21 29 L22 30.5 C17 34.5 7 35.5 1 33.5Z"/>
</symbol>
<symbol id="avMeigong" viewBox="0 0 40 40">
<rect width="40" height="40" fill="#9a8f82"/>
<rect x="32" y="0" width="8" height="12" fill="#a89e91"/>
<path fill="#6e655c" d="M30 12 H40 V40 H30Z"/>
<path fill="#1b1615" d="M7 0 H30 C33 5 33 12 31 17 C30 24 32 31 34 40 H0 V10 C1 5 4 1 7 0Z"/>
<path fill="#e9d7d0" d="M14 10 C18 7.5 25 8 27 12 L28 16 L29 18.5 L27.6 19.5 L27.8 22 C27 25 24 25.5 21.5 24 L20 28 C20 31 23 33 24 36 L23 40 H7 L8 36 C11 34 13 31 13.5 27 C12 23 11 18 12 14Z"/>
<path fill="#1b1615" d="M12 10 C16 6 24 6 27 10 C23 9.5 19 11.5 17 15 C15 19 15.5 23 15 26 L12.5 28 C11 22 10.5 15 12 10Z"/>
<path fill="#c9a79c" d="M23.2 19.6 L26 19.2 L25.6 20.6 L23.6 20.8Z"/>
<path fill="#8c6a5a" d="M0 35 C4 33.5 9 34 13 36 L15 40 H0Z"/>
<path fill="#1b1615" d="M20 26 C22 24.5 25 25 27 24 C29 28 31 34 33.5 40 H24.5 C24 35 22 30 20 26Z"/>
<path fill="#dcc8bb" d="M29.5 31 C33 29.5 37 31 38 35 L38 40 H33.5 C32.5 37 31 34 29.5 31Z"/>
<rect x="34.2" y="9" width="5.8" height="21" rx="0.8" fill="#121012"/>
<path fill="#a47b6a" d="M33.5 21 L40 23 V25 L33.5 23.5Z M33 24.5 L40 27 V29 L33 26.5Z"/>
</symbol>
<symbol id="avBeach" viewBox="0 0 40 40">
<rect width="40" height="40" fill="url(#gBeach)"/>
<path fill="#fff" opacity="0.55" d="M2 4 C6 2 12 3 16 5 C10 6 5 6 2 4Z M18 3 C24 1 32 2 38 4 C30 6 23 5 18 3Z M4 10 C10 8 16 9 20 11 C13 12 8 12 4 10Z"/>
<path fill="#6e8196" d="M13 17.8 L20 16.2 L24 14.8 L29 15.8 L34 15.2 L40 17 V18.2 H13Z"/>
<path fill="#f2682a" d="M18.6 20 C18.6 18.6 22 18.6 22 20 L21.6 26 H19Z"/><circle cx="20" cy="17.8" r="1.1" fill="#2e2420"/>
<path stroke="#e2a58c" stroke-width="0.9" d="M19.6 26 V32 M21 26 V32"/>
<path fill="#f4f7fa" opacity="0.6" d="M0 30 C10 28 20 32 40 29 V31.5 C20 34.5 10 30.5 0 32.5Z"/>
</symbol>
<symbol id="avGrid9" viewBox="0 0 40 40">
<rect width="40" height="40" fill="#e6e6e6"/>
<rect x="2" y="2" width="11" height="11" fill="#b9bcc0"/><rect x="14.5" y="2" width="11" height="11" fill="#5fa3cf"/><rect x="27" y="2" width="11" height="11" fill="#4d5a3f"/>
<rect x="2" y="14.5" width="11" height="11" fill="#f3f3f3"/><rect x="14.5" y="14.5" width="11" height="11" fill="#efc9ae"/><rect x="27" y="14.5" width="11" height="11" fill="#c9ab86"/>
<rect x="2" y="27" width="11" height="11" fill="#6b7a2e"/><rect x="14.5" y="27" width="11" height="11" fill="#8fae9a"/><rect x="27" y="27" width="11" height="11" fill="#4c8a35"/>
<rect x="5.5" y="3" width="4" height="10" fill="#5b626b"/><rect x="14.5" y="8" width="11" height="5" fill="#d9a267"/><circle cx="20" cy="20" r="2.6" fill="#d23c2c"/><rect x="5" y="17" width="5" height="8" fill="#8b8f8c"/><circle cx="32.5" cy="31" r="3.4" fill="#7fc24a"/><rect x="16" y="29" width="7" height="9" fill="#d8c25a"/><rect x="2" y="27" width="11" height="4" fill="#b9c7e0"/>
</symbol>
<symbol id="avBarbara" viewBox="0 0 40 40">
<rect width="40" height="40" fill="#48552f"/>
<path fill="#2f3a22" d="M0 0 H22 L14 14 L0 20Z"/><path fill="#8ea35f" d="M28 0 H40 V12 L33 9Z"/><path fill="#6d7f4a" d="M22 0 H28 L33 9 L26 8Z"/>
<path fill="#6e6450" d="M0 27 C10 23 30 25 40 29 V40 H0Z"/>
<path fill="#574a32" d="M19 8 C24 4 31 8 30 16 L33 30 H15 L17 17Z"/>
<ellipse cx="24.5" cy="13" rx="3.4" ry="4" fill="#e0bea8"/>
<path fill="#e3c4b2" d="M15 25 L25 23 L27 26 L16 29Z"/>
<path fill="#54505e" d="M9 12 L14 14 L14 28 L5 38 L1 36 L10 25Z"/>
<path fill="#857a62" d="M6 33 C14 29 28 31 38 35 V40 H6Z"/>
<path fill="#3a3528" d="M16 29 C22 28 30 29 34 32 L30 36 C24 33 18 33 14 34Z" opacity="0.7"/>
</symbol>
<symbol id="avHotel" viewBox="0 0 40 40">
<rect width="40" height="40" fill="url(#gDusk)"/>
<path fill="#f0a8b4" opacity="0.75" d="M0 21 C6 18.6 12 22 20 20.6 L22 25 H0Z"/>
<path fill="#7f99c2" d="M40 1 L36.6 2.4 C33 14 25 24 11 30.6 L3 33.6 V37 H40Z"/>
<path stroke="#d3e0f2" stroke-width="0.8" fill="none" d="M38.4 5.6 C33.6 17 25.6 27 11 33 M39 10.6 C34.4 20 27.4 29 15 34.6 M39.6 16 C35.4 24 29.4 31 21 36 M40 22 C36.4 28 32.4 33 27.4 37"/>
<path stroke="#b89af0" stroke-width="0.9" fill="none" d="M40 1 L36.6 2.4 C33 14 25 24 11 30.6"/>
<path fill="#1b3242" d="M0 34.4 H40 V40 H0Z"/>
<path fill="#e9d28a" d="M8 35.4 h2 v1 h-2z M14 35.8 h3 v1 h-3z M22 36 h4 v1 h-4z M30 36 h5 v1 h-5z" opacity="0.8"/>
<path fill="#27463a" d="M5 33 l2.2 -4.4 l2.2 4.4z M11 34 l1.8 -3.4 l1.8 3.4z"/>
</symbol>
<symbol id="avSub" viewBox="0 0 40 40">
<rect width="40" height="40" fill="#1485ee"/>
<rect x="10" y="8" width="20" height="24" rx="1" fill="#fff"/>
<circle cx="14" cy="12" r="1.2" fill="#1485ee"/><path stroke="#1485ee" stroke-width="1.6" d="M12.5 16 H23 M12.5 19.5 H20 M12.5 23 H18"/>
</symbol>
<symbol id="avCat" viewBox="0 0 40 40">
<linearGradient id="gCat" x1="0" y1="0" x2="0" y2="1"><stop offset="0" stop-color="#c4bd98"/><stop offset="0.35" stop-color="#a29c7a"/><stop offset="1" stop-color="#7d785f"/></linearGradient>
<rect width="40" height="40" fill="url(#gCat)"/>
<path fill="#d6d0ae" d="M3 0 H37 L35 5 C28 2.5 12 2.5 5 5Z"/>
<ellipse cx="20" cy="22" rx="11" ry="9" fill="#b3ab8a" opacity="0.8"/>
<ellipse cx="4" cy="12.4" rx="4.4" ry="3.4" fill="#15171a"/><ellipse cx="36" cy="12" rx="4.4" ry="3.4" fill="#15171a"/>
<circle cx="3" cy="11.4" r="1" fill="#5d7f9a"/><circle cx="35" cy="11" r="1" fill="#5d7f9a"/>
<path fill="#c5a08c" d="M16.5 17.5 C18 16.4 22 16.4 23.5 17.5 L21.4 21 H18.6Z"/>
<path stroke="#5e5a46" stroke-width="0.9" fill="none" d="M20 21 V25.4 M20 25.4 C18 28.4 14.6 28.4 12.6 26.4 M20 25.4 C22 28.4 25.4 28.4 27.4 26.4"/>
<path stroke="#86a6bc" stroke-width="0.9" d="M3.6 16 V34 M36.4 16 V34"/>
</symbol>
<symbol id="avGrid4" viewBox="0 0 40 40">
<rect width="40" height="40" fill="#e9e9e9"/>
<rect x="1.5" y="1.5" width="18" height="18" fill="#20241c"/><ellipse cx="13" cy="8" rx="6" ry="5" fill="#8f9a7c"/>
<rect x="20.5" y="1.5" width="18" height="18" fill="#9a9a70"/><circle cx="29.5" cy="9" r="5" fill="#efefe8"/><circle cx="27.5" cy="8" r="1.3" fill="#222"/><circle cx="31.5" cy="8" r="1.3" fill="#222"/>
<rect x="1.5" y="20.5" width="18" height="18" fill="#f8f8f6"/><circle cx="10.5" cy="29" r="5" fill="#f1d2b8"/><path fill="#3b2c24" d="M5 28 C5 22 16 22 16 28 C13 25 8 25 5 28Z"/><rect x="7" y="34" width="7" height="4.5" fill="#8fb39a"/>
<g transform="translate(20.5 20.5) scale(0.5)"><use href="#penguin"/></g>
</symbol>
<symbol id="avSketch" viewBox="0 0 40 40">
<rect width="40" height="40" fill="#fdfdfd"/>
<path fill="none" stroke="#333" stroke-width="0.8" d="M21 8 C24 6 28 8 27 12 C26 15 22 15 21 12Z M20 14 C16 18 16 24 18 30 M28 14 C30 20 30 26 28 30 M10 22 C8 26 8 30 9 34 M12 20 C14 22 14 28 13 32 M18 30 C22 33 27 33 30 30 M16 34 H32"/>
<path fill="#555" d="M22 7 h5 v2 h-5z"/>
</symbol>
</defs></svg>

<!-- wallpaper logos -->
<svg class="abs" style="left:80px;top:112px;width:52px;height:52px" viewBox="80 112 52 52">
<g fill="none" stroke="#fff" stroke-linecap="butt">
<path d="M98 126 C96 138 93 150 90 158" stroke-width="5"/>
<path d="M114 118.5 C111 134 106 150 101.5 161.5" stroke-width="5.4"/>
<path d="M82.5 147 C92 139 106 133 125 130" stroke-width="3.2"/>
</g></svg>
<div class="wp" style="left:135px;top:113px;font-size:19px;line-height:30px;letter-spacing:1.4px;font-weight:bold;font-style:italic;color:#fff;letter-spacing:0">假日酒店</div>
<div class="wp" style="left:136px;top:136px;font-size:23px;line-height:30px;font-weight:bold;font-style:italic;color:#fff;transform:scaleX(0.815);transform-origin:0 0">Holiday Inn</div>
<div class="wp" style="left:137px;top:165px;font-size:7px;line-height:10px;letter-spacing:0.4px;color:#d8e6de">洲际酒店集团旗下</div>
<div class="wp" style="left:138px;top:182px;font-size:4.5px;line-height:8px;letter-spacing:0.2px;color:#d8e6de">贵阳机场</div>
<div class="wp" style="left:135px;top:189px;font-size:6.6px;line-height:9px;font-weight:bold;color:#e2ece6;letter-spacing:-0.1px">GUIYANG AIRPORT</div>

<div class="abs" style="left:284px;top:109px;width:53px;height:52px;background:#fff"></div>
<div class="abs" style="left:338px;top:109px;width:53px;height:52px;background:#fff"></div>
<svg class="abs" style="left:284px;top:109px;width:53px;height:52px" viewBox="0 0 53 52">
<g fill="none" stroke="#2f7352" stroke-linecap="round">
<path d="M24.9 7.5 C22.5 19 17.5 31 12.2 40.6" stroke-width="4.6"/>
<path d="M38.3 3.6 C36 17 31.5 33 26.4 47.4" stroke-width="4.8"/>
<path d="M5.3 28.6 C16 21 34 16 50.5 13.8" stroke-width="3"/>
</g></svg>
<div class="wp" style="left:343px;top:116px;font-size:7px;line-height:9px;font-style:italic;color:#2f7352;font-weight:bold">智选假日酒店</div>
<div class="wp" style="left:342px;top:125px;font-size:8.7px;line-height:13px;font-style:italic;color:#2f7352;font-weight:bold;letter-spacing:-0.3px">Holiday Inn</div>
<div class="wp" style="left:342px;top:135px;font-size:13.2px;line-height:19px;font-style:italic;color:#2f7352;letter-spacing:-0.6px">Express</div>
<div class="wp" style="left:237px;width:200px;text-align:center;top:168px;font-size:9px;line-height:13px;letter-spacing:1.6px;color:#dbe8e1">洲际酒店集团旗下</div>
<div class="wp" style="left:237px;width:200px;text-align:center;top:185px;font-size:8.5px;line-height:13px;letter-spacing:2.8px;color:#dbe8e1;padding-left:3px">贵阳机场</div>
<div class="wp" style="left:237px;width:200px;text-align:center;top:196px;font-size:7.6px;line-height:11px;color:#dbe8e1">GUIYANG AIRPORT</div>

<div class="ic" style="left:0px;top:0px"><svg viewBox="0 0 48 48"><use href="#recycle"/></svg><div class="lb">回收站</div></div>
<div class="ic" style="left:76px;top:0px"><svg viewBox="0 0 48 48"><use href="#network"/></svg><div class="lb">网络</div></div>
<div class="ic" style="left:152px;top:0px"><svg viewBox="0 0 48 48"><use href="#thispc"/></svg><div class="lb">此电脑</div></div>
<div class="ic" style="left:228px;top:0px"><svg viewBox="0 0 48 48"><use href="#folderdoc"/></svg><div class="lb">客信类型</div></div>
<div class="ic" style="left:304px;top:0px"><svg viewBox="0 0 48 48"><use href="#xlsx"/></svg><div class="lb">每日值班经理<br>记录MOD1...</div></div>
<div class="ic" style="left:0px;top:100px"><svg viewBox="0 0 48 48"><use href="#chrome"/><use href="#sc"/></svg><div class="lb"><span class="la">Google</span><br><span class="la">Chrome</span></div></div>
<div class="ic" style="left:76px;top:100px"><svg viewBox="0 0 48 48"><use href="#hpscan"/><use href="#sc"/></svg><div class="lb"><span class="la">HP Print</span><br><span class="la">Scan Doct...</span></div></div>
<div class="ic" style="left:152px;top:100px"><svg viewBox="0 0 48 48"><use href="#wecom"/><use href="#sc"/></svg><div class="lb">企业微信</div></div>
<div class="ic" style="left:228px;top:100px"><svg viewBox="0 0 48 48"><use href="#folder"/></svg><div class="lb"><span class="la">HP</span></div></div>
<div class="ic" style="left:0px;top:200px"><svg viewBox="0 0 48 48"><use href="#acrobat"/><use href="#sc"/></svg><div class="lb"><span class="la">Adobe</span><br><span class="la">Acrobat</span></div></div>
<div class="ic" style="left:76px;top:200px"><svg viewBox="0 0 48 48"><use href="#scanner"/><use href="#sc"/></svg><div class="lb"><span class="la">HP LJ</span><br><span class="la">M1271...</span></div></div>
<div class="ic" style="left:152px;top:200px"><svg viewBox="0 0 48 48"><use href="#folder"/></svg><div class="lb">财务预算</div></div>
<div class="ic" style="left:228px;top:200px"><svg viewBox="0 0 48 48"><use href="#folderdoc"/></svg><div class="lb">保险报销</div></div>
<div class="ic" style="left:0px;top:300px"><svg viewBox="0 0 48 48"><use href="#saflokcrs"/><use href="#sc"/></svg><div class="lb"><span class="la">Saflok_CRS</span></div></div>
<div class="ic" style="left:76px;top:300px"><svg viewBox="0 0 48 48"><use href="#outlook"/><use href="#sc"/></svg><div class="lb"><span class="la">Outlook</span></div></div>
<div class="ic" style="left:152px;top:300px"><svg viewBox="0 0 48 48"><use href="#folderdoc"/></svg><div class="lb"><span class="la">GSM</span></div></div>
<div class="ic" style="left:228px;top:300px"><svg viewBox="0 0 48 48"><use href="#docx"/></svg><div class="lb">MOD权限申<br>请表</div></div>
<div class="ic" style="left:0px;top:400px"><svg viewBox="0 0 48 48"><use href="#hp"/><use href="#sc"/></svg><div class="lb"><span class="la">HP LaserJet</span><br><span class="la">Pro MFP ...</span></div></div>
<div class="ic" style="left:76px;top:400px"><svg viewBox="0 0 48 48"><use href="#printcolor"/><use href="#sc"/></svg><div class="lb">购买耗材 -<br><span class="la">HP LaserJ...</span></div></div>
<div class="ic" style="left:152px;top:400px"><svg viewBox="0 0 48 48"><use href="#folder"/></svg><div class="lb">前厅</div></div>
<div class="ic" style="left:228px;top:400px"><svg viewBox="0 0 48 48"><use href="#docx"/></svg><div class="lb">针对性回复</div></div>
<div class="ic" style="left:0px;top:500px"><svg viewBox="0 0 48 48"><use href="#excelapp"/><use href="#sc"/></svg><div class="lb"><span class="la">Excel</span></div></div>
<div class="ic" style="left:76px;top:500px"><svg viewBox="0 0 48 48"><use href="#pptapp"/><use href="#sc"/></svg><div class="lb"><span class="la">PowerPoint</span></div></div>
<div class="ic" style="left:152px;top:500px"><svg viewBox="0 0 48 48"><use href="#folderxls"/></svg><div class="lb">绩效考核</div></div>
<div class="ic" style="left:228px;top:500px"><svg viewBox="0 0 48 48"><use href="#docx"/></svg><div class="lb">好评回复模板</div></div>
<div class="ic" style="left:0px;top:600px"><svg viewBox="0 0 48 48"><use href="#kunlun"/><use href="#sc"/></svg><div class="lb"><span class="la">KunlunVat...</span><br>- 快捷方式</div></div>
<div class="ic" style="left:76px;top:600px"><svg viewBox="0 0 48 48"><use href="#wordapp"/><use href="#sc"/></svg><div class="lb"><span class="la">Word</span></div></div>
<div class="ic" style="left:152px;top:600px"><svg viewBox="0 0 48 48"><use href="#folder"/></svg><div class="lb">ing会员培训<br>证书</div></div>
<div class="ic" style="left:228px;top:600px"><svg viewBox="0 0 48 48"><use href="#xlsx"/></svg><div class="lb">HB问卷统计<br><span class="la">2025</span></div></div>
<div class="ic" style="left:0px;top:700px"><svg viewBox="0 0 48 48"><use href="#wechatthumb"/><use href="#sc"/></svg><div class="lb">微信</div></div>
<div class="ic" style="left:76px;top:700px"><svg viewBox="0 0 48 48"><use href="#edge"/><use href="#sc"/></svg><div class="lb"><span class="la">Microsoft</span><br><span class="la">Edge</span></div></div>
<div class="ic" style="left:152px;top:700px"><svg viewBox="0 0 48 48"><use href="#folderdoc"/></svg><div class="lb">风险案例分享</div></div>
<div class="ic" style="left:0px;top:800px"><svg viewBox="0 0 48 48"><use href="#key"/><use href="#sc"/></svg><div class="lb"><span class="la">Saflok_Cli...</span></div></div>
<div class="ic" style="left:76px;top:800px"><svg viewBox="0 0 48 48"><use href="#potplayer"/><use href="#sc"/></svg><div class="lb"><span class="la">PotPlayer 64</span><br><span class="la">bit</span></div></div>
<div class="ic" style="left:152px;top:800px"><svg viewBox="0 0 48 48"><use href="#folderxls"/></svg><div class="lb">团队报告</div></div>
<div class="ic" style="left:0px;top:900px"><svg viewBox="0 0 48 48"><use href="#laserjet"/><use href="#sc"/></svg><div class="lb"><span class="la">HP LaserJet</span><br><span class="la">Pro M404-...</span></div></div>
<div class="ic" style="left:76px;top:900px"><svg viewBox="0 0 48 48"><use href="#pubapp"/><use href="#sc"/></svg><div class="lb"><span class="la">Publisher</span></div></div>
<div class="ic" style="left:152px;top:900px"><svg viewBox="0 0 48 48"><use href="#folderpdf"/></svg><div class="lb">洲际</div></div>
<div class="ic" style="left:532px;top:0px"><svg viewBox="0 0 48 48"><use href="#edge"/><use href="#sc"/></svg><div class="lb"><span class="la">SHIJI</span></div></div>
<div class="ic" style="left:608px;top:0px"><svg viewBox="0 0 48 48"><use href="#edge"/></svg><div class="lb">--贵阳机场假<br>日酒店群网...</div></div>
<div class="ic" style="left:684px;top:0px"><svg viewBox="0 0 48 48"><use href="#edge"/><use href="#sc"/></svg><div class="lb">携程后台</div></div>
<div class="ic" style="left:760px;top:0px"><svg viewBox="0 0 48 48"><use href="#edge"/><use href="#sc"/></svg><div class="lb">美团</div></div>
<div class="ic" style="left:836px;top:0px"><svg viewBox="0 0 48 48"><use href="#edge"/><use href="#sc"/></svg><div class="lb">停车</div></div>
<div class="ic" style="left:912px;top:0px"><svg viewBox="0 0 48 48"><use href="#edge"/><use href="#sc"/></svg><div class="lb">发票后台</div></div>
<div class="ic" style="left:988px;top:0px"><svg viewBox="0 0 48 48"><use href="#edge"/><use href="#sc"/></svg><div class="lb"><span class="la">AI</span></div></div>
<div class="ic" style="left:1064px;top:0px"><svg viewBox="0 0 48 48"><use href="#edge"/><use href="#sc"/></svg><div class="lb">紫楠</div></div>
<div class="ic" style="left:1140px;top:0px"><svg viewBox="0 0 48 48"><use href="#edge"/><use href="#sc"/></svg><div class="lb">洲际商城</div></div>
<div class="ic" style="left:1216px;top:0px"><svg viewBox="0 0 48 48"><use href="#edge"/><use href="#sc"/></svg><div class="lb">飞猪</div></div>
<div class="ic" style="left:1292px;top:0px"><svg viewBox="0 0 48 48"><use href="#edge"/><use href="#sc"/></svg><div class="lb">网易邮箱</div></div>
<div class="ic" style="left:1368px;top:0px"><svg viewBox="0 0 48 48"><use href="#edge"/><use href="#sc"/></svg><div class="lb">付讯</div></div>
<div class="ic" style="left:1444px;top:0px"><svg viewBox="0 0 48 48"><use href="#edge"/><use href="#sc"/></svg><div class="lb">抖音</div></div>
<div class="ic" style="left:532px;top:100px"><svg viewBox="0 0 48 48"><use href="#edge"/><use href="#sc"/></svg></div>
<div class="ic" style="left:608px;top:100px"><svg viewBox="0 0 48 48"><use href="#edge"/><use href="#sc"/></svg></div>
<div class="ic" style="left:684px;top:100px"><svg viewBox="0 0 48 48"><use href="#edge"/><use href="#sc"/></svg></div>
<div class="ic" style="left:760px;top:100px"><svg viewBox="0 0 48 48"><use href="#edge"/><use href="#sc"/></svg></div>
<div class="ic" style="left:836px;top:100px"><svg viewBox="0 0 48 48"><use href="#edge"/><use href="#sc"/></svg></div>
<div class="ic" style="left:912px;top:100px"><svg viewBox="0 0 48 48"><use href="#edge"/><use href="#sc"/></svg></div>
<div class="ic" style="left:988px;top:100px"><svg viewBox="0 0 48 48"><use href="#txt"/></svg></div>
<div class="ic" style="left:1672px;top:0px"><svg viewBox="0 0 48 48"><use href="#chromedoc"/></svg><div class="lb"><span class="la">Free Room</span><br><span class="la">Upgrade ...</span></div></div>
<div class="ic" style="left:1748px;top:0px"><svg viewBox="0 0 48 48"><use href="#chromedoc"/></svg><div class="lb">假日楼层平面<br>图及房型统...</div></div>
<div class="ic" style="left:1824px;top:0px"><svg viewBox="0 0 48 48"><use href="#xlsx"/></svg><div class="lb"><span class="la">GC Retail</span><br><span class="la">Rate Car...</span></div></div>
<div class="ic" style="left:1748px;top:100px"><svg viewBox="0 0 48 48"><use href="#xlsx"/></svg><div class="lb">假日酒店 AR<br>应收账号</div></div>
<div class="ic" style="left:1824px;top:100px"><svg viewBox="0 0 48 48"><use href="#xlsx"/></svg><div class="lb">房型-KWEAP</div></div>
<div class="ic" style="left:1748px;top:200px"><svg viewBox="0 0 48 48"><use href="#xls"/></svg><div class="lb"><span class="la">KWEAP</span><br><span class="la">GSM Dai...</span></div></div>
<div class="ic" style="left:1824px;top:200px"><svg viewBox="0 0 48 48"><use href="#xlsx"/></svg><div class="lb">通联POS 撤<br>销(2)</div></div>
<div class="ic" style="left:1748px;top:300px"><svg viewBox="0 0 48 48"><use href="#thumbxls"/></svg><div class="lb">假日HI Rate<br><span class="la">Category-...</span></div></div>
<div class="ic" style="left:1824px;top:300px"><svg viewBox="0 0 48 48"><use href="#xlsx"/></svg><div class="lb">团队招募登记</div></div>
<div class="ic" style="left:1748px;top:400px"><svg viewBox="0 0 48 48"><use href="#xlsx"/></svg><div class="lb">TMC介绍总<br>页(2)</div></div>
<div class="ic" style="left:1824px;top:400px"><svg viewBox="0 0 48 48"><use href="#xls"/></svg><div class="lb"><span class="la">GSA Check</span><br><span class="la">List</span></div></div>
<div class="ic" style="left:1748px;top:500px"><svg viewBox="0 0 48 48"><use href="#chromedoc"/></svg><div class="lb"><span class="la">dormakaba</span><br>灯号说明 -...</div></div>
<div class="ic" style="left:1824px;top:500px"><svg viewBox="0 0 48 48"><use href="#xlsx"/></svg><div class="lb">前厅部-11月<br>资金计划表</div></div>
<div class="ic" style="left:1748px;top:600px"><svg viewBox="0 0 48 48"><use href="#xlsx"/></svg><div class="lb">服务费费率</div></div>
<div class="ic" style="left:1824px;top:600px"><svg viewBox="0 0 48 48"><use href="#xlsx"/></svg><div class="lb">IHG酒店代码<br><span class="la">20240409(1)</span></div></div>
<div id="backwin">
<svg class="abs" style="left:9px;top:10px;width:15px;height:13px" viewBox="0 0 15 13"><path d="M13.5 6.5 H1.8 M7 1 L1.5 6.5 L7 12" fill="none" stroke="#3a3a3a" stroke-width="1"/></svg>
<svg class="abs" style="left:939px;top:12px;width:9px;height:9px" viewBox="0 0 9 9"><path d="M0.5 0.5 L8.5 8.5 M8.5 0.5 L0.5 8.5" stroke="#3a3a3a" stroke-width="1"/></svg>
</div>
<div id="wx">
<div class="side">
<svg class="abs" style="left:9px;top:36px;width:36px;height:36px" viewBox="0 0 36 36"><use href="#penguin"/></svg>
<svg class="sico" style="top:98px;left:16px;width:22px;height:22px" viewBox="0 0 22 22"><path fill="#07c160" d="M11 2 C16.5 2 20.5 5.4 20.5 9.8 C20.5 14.2 16.5 17.6 11 17.6 C9.6 17.6 8.4 17.4 7.2 17 L3.4 19.4 L4.2 15.4 C2.5 14 1.5 12 1.5 9.8 C1.5 5.4 5.5 2 11 2Z"/></svg>
<svg class="sico" style="top:138px" viewBox="0 0 24 24"><path fill="none" stroke="#9a9a9a" stroke-width="1.2" d="M11 3.5 C13.6 3.5 15.2 5.6 15 8.4 C14.8 10.6 14 12 13 13 C13 14.6 14.4 15.2 17 16.2 C19.4 17.2 20.4 18.4 20.5 20.5 H2 C2 18.4 3 17.2 5.4 16.2 C8 15.2 9.2 14.6 9.2 13 C8.2 12 7.4 10.6 7.2 8.4 C7 5.6 8.4 3.5 11 3.5Z M18 9.5 H22 M18 12.5 H22"/></svg>
<svg class="sico" style="top:179px" viewBox="0 0 24 24"><path fill="none" stroke="#9a9a9a" stroke-width="1.2" stroke-linejoin="round" d="M12 2.5 L20.5 7 V17 L12 21.5 L3.5 17 V7Z M3.5 7 L12 11.5 L20.5 7 M12 11.5 V21.5"/></svg>
<svg class="sico" style="top:219px" viewBox="0 0 24 24"><path fill="none" stroke="#9a9a9a" stroke-width="1.2" d="M3.5 20 V5 H9.5 L11 7 H20.5 V20Z M3.5 10.5 H20.5"/></svg>
<svg class="sico" style="top:260px" viewBox="0 0 24 24"><g fill="none" stroke="#9a9a9a" stroke-width="1.2"><circle cx="12" cy="12" r="9"/><circle cx="12" cy="12" r="3.2"/><path d="M12 3 L14.8 10.4 M20.6 9 L14.6 14 M17.5 19 L11 15 M7 19.5 L9.2 13 M3.2 10.5 L10.5 9.2 M6.5 5 L12.8 8.8"/></g></svg>
<svg class="sico" style="top:304px" viewBox="0 0 24 24"><path fill="none" stroke="#9a9a9a" stroke-width="1.2" d="M3 5 C6 3 9 8 12 14 C15 8 18 3 21 5 C22 10 20 19 17.5 21 C15 21 13 17 12 14 C11 17 9 21 6.5 21 C4 19 2 10 3 5Z"/></svg>
<div class="abs" style="left:31px;top:305px;width:9px;height:9px;border-radius:50%;background:#fa5151"></div>
<svg class="sico" style="top:605px" viewBox="0 0 24 24"><g fill="none" stroke="#8a8a8a" stroke-width="1.1"><circle cx="12" cy="12" r="8.5"/><path d="M12 9.5 V14 C12 16.6 8 16.6 8 14 C8 12.6 9 12 10 12 M12 14.5 V10 C12 7.4 16 7.4 16 10 C16 11.4 15 12 14 12"/></g></svg>
<svg class="sico" style="top:648px" viewBox="0 0 24 24"><path fill="none" stroke="#8a8a8a" stroke-width="1.1" d="M5.5 3.5 H18.5 V20.5 H5.5Z M10 17.5 H14"/></svg>
<svg class="sico" style="top:688px" viewBox="0 0 24 24"><path fill="none" stroke="#8a8a8a" stroke-width="1.2" d="M4.5 6 H19.5 M4.5 12 H19.5 M4.5 18 H19.5"/></svg>
<div class="abs" style="left:32px;top:688px;width:8px;height:8px;border-radius:50%;background:#fa5151"></div>
</div>

<div class="list">
<div class="lhead">
<div class="srch"><svg class="abs" style="left:6px;top:7px;width:12px;height:12px" viewBox="0 0 12 12"><circle cx="4.8" cy="4.8" r="3.7" fill="none" stroke="#666" stroke-width="0.9"/><path d="M7.5 7.5 L11.2 11.2" stroke="#666" stroke-width="1"/></svg><span class="abs" style="left:24px;top:3px;font-size:12px;line-height:20px;color:#9a9a9a">搜索</span></div>
<div class="plus"><svg class="abs" style="left:7px;top:7px;width:11px;height:11px" viewBox="0 0 11 11"><path d="M5.5 0.5 V10.5 M0.5 5.5 H10.5" stroke="#444" stroke-width="1"/></svg></div>
</div>
<div class="pin">
<svg class="abs" style="left:22px;top:15px;width:18px;height:16px" viewBox="0 0 18 16"><path d="M1 2.5 H5 M7.5 2.5 H18 M1 8.5 H5 M7.5 8.5 H18 M1 14.5 H5 M7.5 14.5 H18" stroke="#1a1a1a" stroke-width="1"/></svg>
<span class="abs" style="left:62px;top:14px;font-size:12px;line-height:20px;color:#4c4c4c;white-space:nowrap">16个置顶聊天</span>
<svg class="abs" style="left:198px;top:19px;width:14px;height:8px" viewBox="0 0 14 8"><path d="M1 1 L7 7 L13 1" fill="none" stroke="#8a8a8a" stroke-width="1"/></svg>
</div>
<div class="row" style="top:109px;background:#c9c8c7"><svg class="av" viewBox="0 0 40 40"><use href="#avMeigong"/></svg><div class="nm">美工</div><div class="tm">12:52</div><div class="pv">自助洗衣房3楼开放时间...</div></div>
<div class="row" style="top:173px"><svg class="av" viewBox="0 0 36 36"><use href="#penguin"/></svg><div class="nm">YOLO</div><div class="tm">12:51</div><div class="pv">禁止吸烟请勿在酒店任...</div></div>
<div class="row" style="top:237px"><svg class="av" viewBox="0 0 40 40"><use href="#avBeach"/></svg><div class="nm">王chole</div><div class="tm">12:36</div><div class="pv">帕萨特</div></div>
<div class="row" style="top:301px"><svg class="av" viewBox="0 0 40 40"><use href="#avGrid9"/></svg><div class="nm">酒店大群</div><div class="tm">12:09</div><div class="pv">财务部Barbara张英...</div>
<svg class="abs" style="left:199px;top:40px;width:12px;height:12px" viewBox="0 0 12 12"><path fill="#b9b9b9" d="M6 1 C8 1 9.3 2.6 9.3 4.6 V7 L10.6 9 H1.4 L2.7 7 V4.6 C2.7 2.6 4 1 6 1Z M4.8 9.8 H7.2 C7.2 11.4 4.8 11.4 4.8 9.8Z"/><path d="M1.5 1.5 L10.5 11" stroke="#b9b9b9" stroke-width="1"/></svg></div>
<div class="row" style="top:365px"><svg class="av" viewBox="0 0 40 40"><use href="#avBarbara"/></svg><div class="nm">Barbara</div><div class="tm">11:20</div><div class="pv">好</div></div>
<div class="row" style="top:429px"><svg class="av" viewBox="0 0 40 40"><use href="#avHotel"/></svg><div class="nm">贵阳机场假日酒...</div><div class="tm">11:10</div><div class="pv">[图片]</div></div>
<div class="row" style="top:493px"><svg class="av" viewBox="0 0 40 40"><use href="#avSub"/></svg><div class="nm">订阅号</div><div class="tm">10:00</div><div class="pv">酒店日记HOTELDAILY: ...</div></div>
<div class="row" style="top:557px"><svg class="av" viewBox="0 0 40 40"><use href="#avCat"/></svg><div class="nm">前厅-Django&nbsp; 彭...</div><div class="tm">昨天</div><div class="pv">可能发的时候点错了</div></div>
<div class="row" style="top:621px"><svg class="av" viewBox="0 0 40 40"><use href="#avGrid4"/></svg><div class="nm">吐槽码沟通群</div><div class="tm">9:51</div><div class="pv">陈伟明：如果要我们帮...</div>
<svg class="abs" style="left:149px;top:15px;width:18px;height:14px" viewBox="0 0 18 14"><path fill="none" stroke="#2d8cf0" stroke-width="1.5" d="M10.5 10 C6 12 1.2 9.6 1.2 6 C1.2 2.8 4 1 7 1 C10.2 1 12.6 3 12.8 5.4"/><path fill="#2d8cf0" d="M2.5 9.5 L2 13 L5.5 11Z"/><circle cx="13.5" cy="8" r="1.6" fill="#f7c41a"/><circle cx="15.5" cy="10.5" r="1.5" fill="#39c83c"/><circle cx="12.8" cy="11.5" r="1.5" fill="#f2571d"/></svg></div>
<div class="row" style="top:685px"><svg class="av" viewBox="0 0 40 40"><use href="#avSketch"/></svg><div class="nm">前厅-Jessie DOM</div><div class="tm">9:48</div><div class="pv">[图片]</div></div>
</div>

<div class="chat">
<div class="abs" style="left:24px;top:17px;font-size:19px;line-height:28px;color:#111;white-space:nowrap">美工</div>
<svg class="abs" style="left:509px;top:6px;width:12px;height:14px" viewBox="0 0 12 14"><path fill="none" stroke="#3a3a3a" stroke-width="1" d="M3.5 1.5 H8.5 M4.2 1.5 V5.5 L2 8.5 H10 L7.8 5.5 V1.5 M6 8.5 V13"/></svg>
<svg class="abs" style="left:543px;top:11px;width:10px;height:3px" viewBox="0 0 10 3"><path d="M0 1.5 H9.5" stroke="#3a3a3a" stroke-width="1"/></svg>
<svg class="abs" style="left:575px;top:8px;width:10px;height:10px" viewBox="0 0 10 10"><rect x="0.5" y="0.5" width="9" height="9" fill="none" stroke="#3a3a3a" stroke-width="1"/></svg>
<svg class="abs" style="left:609px;top:8px;width:9px;height:9px" viewBox="0 0 9 9"><path d="M0.5 0.5 L8.5 8.5 M8.5 0.5 L0.5 8.5" stroke="#3a3a3a" stroke-width="1"/></svg>
<svg class="abs" style="left:605px;top:36px;width:17px;height:5px" viewBox="0 0 17 5"><circle cx="2.5" cy="2.5" r="1.5" fill="#444"/><circle cx="8.5" cy="2.5" r="1.5" fill="#444"/><circle cx="14.5" cy="2.5" r="1.5" fill="#444"/></svg>
<div class="abs" style="left:0;top:61px;width:630px;height:1px;background:#e7e7e7"></div>

<!-- image 1 -->
<div class="abs" style="left:433px;top:71px;width:124px;height:175px;background:#fdfefe;border:1px solid #e6e6e6;border-radius:4px;overflow:hidden">
<svg class="abs" style="left:0;top:0;width:123px;height:50px" viewBox="0 0 123 50">
<circle cx="39.5" cy="16.5" r="11" fill="none" stroke="#f8dde6" stroke-width="1.6"/><circle cx="39.5" cy="16.5" r="8" fill="none" stroke="#fbeaf0" stroke-width="1.6" stroke-dasharray="1.2 1.2"/>
<path fill="#f6cfdc" d="M39.5 13 l1 2.3 l2.5 0.2 l-1.9 1.6 l0.6 2.5 l-2.2 -1.4 l-2.2 1.4 l0.6 -2.5 l-1.9 -1.6 l2.5 -0.2z"/>
<circle cx="84.5" cy="14" r="11.4" fill="none" stroke="#dc5a70" stroke-width="1.5"/><circle cx="84.5" cy="14" r="8.4" fill="none" stroke="#e58c9c" stroke-width="2.4" stroke-dasharray="1.3 1"/>
<path fill="#d8324e" d="M84.5 10 l1.2 2.8 l3 0.2 l-2.3 2 l0.8 3 l-2.7 -1.7 l-2.7 1.7 l0.8 -3 l-2.3 -2 l3 -0.2z"/>
<path d="M122.5 16 C116 20 115.5 31 121.5 36" fill="none" stroke="#e793a3" stroke-width="2.4" stroke-dasharray="1.4 0.8"/>
<path d="M21 13.5 H33 M21 16.8 H34 M21 20 H25 M64 14 H75 M64 17.2 H72 M64 20.4 H70" stroke="#b9b9c2" stroke-width="0.9"/>
<path d="M21 13.5 H28 M64 14 H70" stroke="#6a6a72" stroke-width="0.9"/>
</svg></div>
<svg class="abs" style="left:566px;top:71px;width:34px;height:34px" viewBox="0 0 36 36"><use href="#penguin"/></svg>

<div class="abs" style="left:296px;top:265px;width:38px;height:20px;border-radius:3px;background:#dadada;color:#fff;font-size:12px;line-height:20px;text-align:center">12:52</div>

<!-- toast -->
<div class="abs" style="left:133px;top:322px;width:84px;height:84px;background:#686868;border-radius:2px"></div>
<svg class="abs" style="left:157px;top:340px;width:36px;height:30px" viewBox="0 0 36 30"><path d="M2 17 L12 27 L34 3" fill="none" stroke="#fff" stroke-width="4.4"/></svg>
<div class="abs" style="left:133px;top:380px;width:84px;font-size:12px;line-height:20px;color:#fff;text-align:center">已复制</div>

<!-- image 2 -->
<div class="abs" style="left:427px;top:298px;width:129px;height:174px;border-radius:4px;overflow:hidden;background:#5a4538">
<svg class="abs" style="left:0;top:0;width:129px;height:174px" viewBox="0 0 129 174">
<rect width="129" height="174" fill="#2b2623"/>
<path fill="#9d938b" d="M0 0 H84 V8 H0Z"/><path fill="#a59c95" d="M0 0 H12 V68 H0Z"/>
<path fill="#8a7f78" d="M2 4 h3 v3 h-3z M7 14 h3 v3 h-3z M3 26 h3 v3 h-3z M8 38 h2 v3 h-2z M2 50 h3 v3 h-3z M20 2 h3 v2 h-3z M40 3 h3 v2 h-3z M60 2 h3 v2 h-3z"/>
<path fill="#d6d1cc" d="M84 0 H129 V10 H84Z"/>
<path fill="#c8c4bf" d="M112 8 H129 V88 H112Z"/>
<path fill="#e6e4e2" d="M110 86 L129 82 V174 H108Z"/>
<path fill="#3a322d" d="M0 68 H12 V100 H0Z"/>
<path fill="#6b5a48" d="M0 100 H14 V134 H0Z"/>
<path fill="#c7a676" d="M14 158 H112 V174 H14Z"/>
<path fill="#a9835f" d="M14 168 H112 V174 H14Z"/>
<path fill="#a87a66" d="M0 136 L10 132 L18 140 L24 156 L44 162 L40 168 L20 174 H0Z"/>
<path fill="#8c5f50" d="M0 150 L12 160 L10 174 H0Z"/>
<path fill="#4e2424" d="M8 147 l5 -3 l3 6 l-5 3z"/>
<path fill="#e7e9e7" d="M9.6 5.5 L126.7 9.6 L112.4 159.3 L15.7 160.3Z"/>
<path fill="#dcdfdc" d="M9.6 5.5 L40 6.6 L30 160 L15.7 160.3Z" opacity="0.55"/>
<g fill="none" stroke="#2f6a4c" stroke-width="1.5" stroke-linecap="round"><path d="M65.5 23 L62.5 35 M71.5 22 L68 36 M60 31.5 C64 28.5 70 27 75 26.4"/></g>
<text x="66" y="42.6" text-anchor="middle" font-size="5" font-weight="bold" font-style="italic" fill="#2f6a4c" font-family="Liberation Sans, Noto Sans CJK SC, sans-serif">假日酒店</text>
<text x="66.5" y="50.4" text-anchor="middle" font-size="5.6" font-weight="bold" font-style="italic" fill="#2f6a4c" font-family="Liberation Sans, sans-serif" textLength="28" lengthAdjust="spacingAndGlyphs">Holiday Inn</text>
<path stroke="#8a928d" stroke-width="0.5" d="M59 54.4 H74 M60 60 H73"/>
<path stroke="#cf8a97" stroke-width="0.7" d="M54.8 72.7 V88 M54.8 91.4 V102.2 M54.8 109.4 V116.5 M54.8 124.6 V131.8 M54.8 140.5 V147.5"/>
<g stroke="#5d6561" stroke-width="0.8" fill="none">
<path d="M19 78 C21 75.5 25.5 75.5 27.5 78 M20.5 80 C22 78.6 24.6 78.6 26 80 M23.2 82 V84"/>
<path d="M20 101 V92 H24 C27.4 92 27.4 97 24 97 H20"/>
<path d="M17.6 113 C18 110.6 21 110 24 110 C27 110 29.4 111.4 29.6 113.4 C29.4 115 18 115.4 17.6 113Z"/>
<path d="M24.6 123 L24 131 M21 133.4 L23.6 128.6 L27 133.4Z"/>
<path d="M21 139 V143 C21 147.4 27 147.4 27 143 V139Z M28.6 142 C30.6 142 30.6 147 27.6 147"/>
</g>
<g stroke="#4b524f" stroke-width="1.2">
<path d="M39.5 80.4 H51.3 M39.5 97 H51.3 M36 113 H51.3 M39.5 128.6 H51.3 M36 143.6 H51.3"/>
</g>
<g stroke="#838b87" stroke-width="0.9">
<path d="M58.5 74.4 H100 M58.5 78.4 H113 M58.5 82.4 H86 M58.5 86.4 H105"/>
<path d="M58.5 93.4 H70 M58.5 97.4 H100 M58.5 101.2 H102"/>
<path d="M58.5 111 H91 M58.5 114.8 H82"/>
<path d="M58.5 126.6 H89 M58.5 130.6 H104"/>
<path d="M58.5 142.4 H102 M58.5 146.2 H94"/>
</g>
</svg></div>
<svg class="abs" style="left:566px;top:297px;width:34px;height:34px" viewBox="0 0 36 36"><use href="#penguin"/></svg>

<!-- green bubble (cut) -->
<div class="abs" style="left:228px;top:489px;width:328px;height:7px;background:#95ec69;border-radius:4px 4px 0 0"></div>
<div class="abs" style="left:566px;top:489px;width:34px;height:7px;overflow:hidden"><svg style="display:block;width:34px;height:34px" viewBox="0 0 36 36"><use href="#penguin"/></svg></div>

<!-- input area -->
<div class="abs" style="left:0;top:496px;width:630px;height:232px;background:#f5f5f5;border-top:1px solid #e7e7e7"></div>
<svg class="abs" style="left:25px;top:509px;width:18px;height:18px" viewBox="0 0 18 18"><circle cx="9" cy="9" r="8" fill="none" stroke="#4a4a4a" stroke-width="1.1"/><circle cx="6" cy="6.8" r="1.1" fill="#4a4a4a"/><circle cx="12" cy="6.8" r="1.1" fill="#4a4a4a"/><path d="M4.2 9.8 H13.8 C13.4 13 11.4 14.4 9 14.4 C6.6 14.4 4.6 13 4.2 9.8Z" fill="none" stroke="#4a4a4a" stroke-width="1.1"/></svg>
<svg class="abs" style="left:58px;top:510px;width:18px;height:16px" viewBox="0 0 18 16"><path fill="none" stroke="#4a4a4a" stroke-width="1.1" d="M0.6 15.4 V0.6 H6.5 L8 2.6 H17.4 V15.4Z M0.6 5.6 H17.4"/></svg>
<svg class="abs" style="left:91px;top:509px;width:20px;height:18px" viewBox="0 0 20 18"><path fill="none" stroke="#4a4a4a" stroke-width="1.1" d="M5 1 L11 12 M11 1 L5 12"/><circle cx="4" cy="14" r="2.6" fill="none" stroke="#4a4a4a" stroke-width="1.1"/><circle cx="12" cy="14" r="2.6" fill="none" stroke="#4a4a4a" stroke-width="1.1"/><path d="M16.5 8.5 H19.5 L18 10.5Z" fill="#4a4a4a"/></svg>
<svg class="abs" style="left:123px;top:509px;width:19px;height:18px" viewBox="0 0 19 18"><path fill="none" stroke="#4a4a4a" stroke-width="1.1" d="M9.5 1.2 C14.2 1.2 17.8 4 17.8 7.8 C17.8 11.6 14.2 14.4 9.5 14.4 C8.4 14.4 7.4 14.3 6.5 14 L3.2 16.4 L3.6 12.6 C2 11.4 1.2 9.6 1.2 7.8 C1.2 4 4.8 1.2 9.5 1.2Z"/><circle cx="5.8" cy="7.8" r="0.9" fill="#4a4a4a"/><circle cx="9.5" cy="7.8" r="0.9" fill="#4a4a4a"/><circle cx="13.2" cy="7.8" r="0.9" fill="#4a4a4a"/></svg>
<svg class="abs" style="left:555px;top:509px;width:18px;height:18px" viewBox="0 0 18 18"><path fill="none" stroke="#4a4a4a" stroke-width="1.1" d="M3.5 1.2 L6.5 0.8 L8 5 L6 6.8 C6.8 9 9 11.4 11.4 12.2 L13.2 10.2 L17.2 12 L16.8 15 C16.4 16.6 14.6 17.2 12.6 16.6 C6.8 14.8 2.2 9.6 1.4 4.6 C1.1 2.8 2 1.5 3.5 1.2Z"/></svg>
<svg class="abs" style="left:583px;top:512px;width:21px;height:13px" viewBox="0 0 21 13"><rect x="0.6" y="0.6" width="13.8" height="11.8" rx="1" fill="none" stroke="#4a4a4a" stroke-width="1.1"/><path d="M15.5 5 L20 2.5 V10.5 L15.5 8Z" fill="none" stroke="#4a4a4a" stroke-width="1.1"/></svg>

<div class="abs" style="left:28px;top:536px;width:18px;height:19px;background:#fff"></div>
<div class="abs" style="left:28px;top:537px;font-size:14px;line-height:20px;color:#111;border-bottom:1px dashed #111;height:21px">zh</div>

<!-- IME candidates -->
<div class="abs" style="left:28px;top:558px;width:579px;height:35px;border-radius:8px;background:#f9f9f9;border:1px solid #e3e3e3;box-shadow:0 3px 8px rgba(0,0,0,.16)">
<div class="abs" style="left:3px;top:4px;width:62px;height:26px;border-radius:4px;background:#efefef"></div>
<div class="abs" style="left:4px;top:9px;width:3px;height:16px;border-radius:2px;background:#0a5fd0"></div>
<div class="cand" style="left:14px"><i>1</i>中</div>
<div class="cand" style="left:80px"><i>2</i>这</div>
<div class="cand" style="left:146px"><i>3</i>之</div>
<div class="cand" style="left:212px"><i>4</i>张</div>
<div class="cand" style="left:278px"><i>5</i>找</div>
<div class="cand" style="left:344px"><i>6</i>至</div>
<div class="cand" style="left:410px"><i>7</i>真</div>
<div class="abs" style="left:466px;top:3px;width:1px;height:28px;background:#e6e6e6"></div>
<div class="abs" style="left:519px;top:3px;width:1px;height:28px;background:#e6e6e6"></div>
<div class="abs" style="left:548px;top:3px;width:1px;height:28px;background:#e6e6e6"></div>
<svg class="abs" style="left:477px;top:12px;width:8px;height:10px" viewBox="0 0 8 10"><path d="M7 0.5 V9.5 L0.5 5Z" fill="#b8b8b8"/></svg>
<svg class="abs" style="left:501px;top:12px;width:8px;height:10px" viewBox="0 0 8 10"><path d="M1 0.5 V9.5 L7.5 5Z" fill="#1a1a1a"/></svg>
<svg class="abs" style="left:525px;top:8px;width:18px;height:18px" viewBox="0 0 18 18"><path fill="none" stroke="#1a1a1a" stroke-width="1.2" d="M7.5 3.5 H4 C3 3.5 2.5 4 2.5 5 V14 C2.5 15 3 15.5 4 15.5 H13 C14 15.5 14.5 15 14.5 14 V10.5"/><path fill="#1a1a1a" d="M12 8.6 L8 4.8 C6.4 3 8.6 0.6 10.6 2 L12 3.2 L13.4 2 C15.4 0.6 17.6 3 16 4.8Z"/></svg>
<svg class="abs" style="left:556px;top:13px;width:14px;height:8px" viewBox="0 0 14 8"><path d="M1 1 L7 7 L13 1" fill="none" stroke="#1a1a1a" stroke-width="1.1"/></svg>
</div>

<div class="abs" style="left:500px;top:684px;width:100px;height:32px;border-radius:4px;background:#e9e9e9;color:#07c160;font-size:14px;line-height:32px;text-align:center">发送(S)</div>
</div>
</div>

<div id="taskbar">
<!-- weather -->
<svg width="0" height="0" style="position:absolute"><defs><linearGradient id="gCloud" x1="0" y1="0" x2="0" y2="1"><stop offset="0" stop-color="#eef3fc"/><stop offset="1" stop-color="#a9c3ef"/></linearGradient></defs></svg>
<svg class="abs" style="left:18px;top:11px;width:28px;height:24px" viewBox="0 0 28 24">
<circle cx="18.5" cy="8" r="5" fill="#f59a1f"/>
<path fill="url(#gCloud)" stroke="#a9c0ea" stroke-width="0.5" d="M6 21 C2.5 21 1 18.8 1 16.6 C1 14 3.2 12.3 5.6 12.6 C6.2 9.6 8.8 7.8 11.6 8 C14.4 8.2 16.4 10 17 12.6 C20.6 12 24 14 24 17 C24 19.4 22.2 21 19.6 21Z"/>
</svg>
<div class="abs" style="left:51px;top:8px;font-size:12px;line-height:16px;color:#1c1c1c;white-space:nowrap;letter-spacing:-0.4px">11°C</div>
<div class="abs" style="left:51px;top:24px;font-size:12px;line-height:16px;color:#5a6660;white-space:nowrap">多云</div>
<!-- start -->
<svg class="abs" style="left:683px;top:12px;width:24px;height:24px" viewBox="0 0 24 24">
<path fill="url(#gWin)" d="M0.5 1.5 C0.5 0.9 0.9 0.5 1.5 0.5 H11.3 V11.3 H0.5Z M12.7 0.5 H22.5 C23.1 0.5 23.5 0.9 23.5 1.5 V11.3 H12.7Z M0.5 12.7 H11.3 V23.5 H1.5 C0.9 23.5 0.5 23.1 0.5 22.5Z M12.7 12.7 H23.5 V22.5 C23.5 23.1 23.1 23.5 22.5 23.5 H12.7Z"/>
</svg>
<!-- search pill -->
<div class="abs" style="left:720px;top:8px;width:218px;height:32px;border-radius:16px;background:#ecf8f2;border:1px solid #d3e6dc;box-shadow:0 1px 1px rgba(0,0,0,.08)"></div>
<svg class="abs" style="left:729px;top:15px;width:18px;height:18px" viewBox="0 0 18 18"><circle cx="7.5" cy="7.5" r="5.6" fill="none" stroke="#2b2b2b" stroke-width="1.7"/><path d="M11.7 11.7 L16 16" stroke="#2b2b2b" stroke-width="2" stroke-linecap="round"/></svg>
<div class="abs" style="left:755px;top:13px;font-size:14px;line-height:20px;color:#3f4542;white-space:nowrap">搜索</div>
<svg class="abs" style="left:886px;top:11px;width:46px;height:26px" viewBox="0 0 46 26">
<path d="M3 3 L10 23 M5 9 L2 10 M6 13 L3 15 M8 17 L5 19 M6 8 L8 5" stroke="#8d9473" stroke-width="1" fill="none"/>
<path d="M43 4 L37 22 M42 8 L45 9 M40 13 L43 15 M39 17 L35 16 M41 9 L38 7" stroke="#a8ad62" stroke-width="1.1" fill="none"/>
<circle cx="22" cy="13" r="11" fill="#e9e4da" stroke="#c8c2b6" stroke-width="0.6"/>
<circle cx="22" cy="13" r="9.6" fill="#d9501e"/>
<circle cx="18" cy="9" r="2.6" fill="#f6a12a"/><circle cx="26" cy="9" r="2.4" fill="#f3c63c"/><circle cx="22" cy="14" r="3" fill="#6a2d1c"/><circle cx="17" cy="16" r="2.4" fill="#f4e3c4"/><circle cx="27" cy="17" r="2.6" fill="#f08a24"/><circle cx="22" cy="20" r="2" fill="#7a3620"/><circle cx="29" cy="12" r="1.2" fill="#5aa33a"/>
</svg>
<!-- task view -->
<svg class="abs" style="left:950px;top:12px;width:26px;height:24px" viewBox="0 0 26 24">
<rect x="8" y="2" width="17" height="15" rx="1.5" fill="#f4f6f5" stroke="#e2e6e4" stroke-width="0.5"/>
<rect x="1" y="8" width="17" height="15" rx="1.5" fill="#262626"/>
<rect x="8" y="8" width="10" height="9" fill="#b9b9b9"/>
</svg>
<!-- explorer -->
<svg class="abs" style="left:994px;top:12px;width:26px;height:24px" viewBox="0 0 26 24">
<path fill="#e6a31f" d="M1 3.5 C1 2.6 1.6 2 2.5 2 H8.5 C9.3 2 9.8 2.3 10.2 2.9 L11.3 4.5 H23.5 C24.4 4.5 25 5.1 25 6 V10 H1Z"/>
<path fill="#fbc93c" d="M1 7 H25 V20.5 C25 21.4 24.4 22 23.5 22 H2.5 C1.6 22 1 21.4 1 20.5Z"/>
<path fill="#1b7fd6" d="M5 18 C5 16.9 5.9 16 7 16 H19 C20.1 16 21 16.9 21 18 V22 H5Z"/>
<rect x="9" y="18.2" width="8" height="1.4" rx="0.7" fill="#0f5fae"/>
</svg>
<!-- edge -->
<svg class="abs" style="left:1039px;top:12px;width:24.5px;height:24.5px" viewBox="0 0 48 48"><use href="#edge"/></svg>
<!-- store -->
<svg class="abs" style="left:1082px;top:11px;width:24px;height:26px" viewBox="0 0 24 26">
<path d="M7.5 7 V4.5 C7.5 3.4 8.4 2.5 9.5 2.5 H14.5 C15.6 2.5 16.5 3.4 16.5 4.5 V7" fill="none" stroke="#2f9ae8" stroke-width="2"/>
<path fill="#124a8c" d="M0.5 6.5 H23.5 V22 C23.5 23.9 22.4 25 20.5 25 H3.5 C1.6 25 0.5 23.9 0.5 22Z"/>
<rect x="7" y="11" width="4.4" height="4.4" fill="#f25022"/><rect x="12.4" y="11" width="4.4" height="4.4" fill="#7fba00"/><rect x="7" y="16.4" width="4.4" height="4.4" fill="#00a4ef"/><rect x="12.4" y="16.4" width="4.4" height="4.4" fill="#ffb900"/>
</svg>
<!-- calculator -->
<svg class="abs" style="left:1129px;top:11px;width:20px;height:26px" viewBox="0 0 20 26">
<rect x="0.5" y="0.5" width="19" height="25" rx="1.5" fill="#6f7a88"/>
<rect x="2.5" y="2.5" width="15" height="5" fill="#5fd0f3"/>
<path fill="#c9d0d8" d="M2.5 9.5h4v4h-4zM8 9.5h4v4h-4zM2.5 15h4v4h-4zM8 15h4v4h-4zM2.5 20.5h4v3.5h-4zM8 20.5h4v3.5h-4zM13.5 9.5h4v4h-4z"/>
<rect x="13.5" y="15" width="4" height="9" fill="#124a8c"/>
</svg>
<!-- wechat active -->
<div class="abs" style="left:1166px;top:4px;width:36px;height:40px;border-radius:4px;background:#def5ea;border:1px solid #ecfaf3"></div>
<div class="abs" style="left:1164px;top:4px;width:35px;height:40px;border-radius:4px;background:#e1f6ec;border:1px solid #effbf5;box-shadow:1px 0 1px rgba(0,0,0,.06)"></div>
<svg class="abs" style="left:1169px;top:12px;width:27px;height:24px" viewBox="0 0 27 24">
<path fill="#2fcf5e" d="M10 1.5 C15 1.5 19 4.8 19 9 C19 13.2 15 16.5 10 16.5 C9 16.5 8 16.4 7.2 16.1 L3.8 18 L4.6 15 C2.4 13.6 1 11.4 1 9 C1 4.8 5 1.5 10 1.5Z"/>
<circle cx="7" cy="6.5" r="1.1" fill="#1a8a3a"/><circle cx="13" cy="6.5" r="1.1" fill="#1a8a3a"/>
<path fill="#ececec" d="M18.5 9.5 C22.6 9.5 26 12.2 26 15.6 C26 17.5 25 19.2 23.3 20.3 L23.9 22.6 L21.2 21.2 C20.4 21.5 19.5 21.6 18.5 21.6 C14.4 21.6 11 18.9 11 15.6 C11 12.2 14.4 9.5 18.5 9.5Z"/>
<circle cx="16" cy="13.8" r="0.9" fill="#9a9a9a"/><circle cx="21" cy="13.8" r="0.9" fill="#9a9a9a"/>
</svg>
<div class="abs" style="left:1174px;top:40px;width:16px;height:3px;border-radius:2px;background:#0a6fd8"></div>
<!-- chrome -->
<svg class="abs" style="left:1214.5px;top:12px;width:24.5px;height:24.5px" viewBox="0 0 48 48"><use href="#chrome"/></svg>
<div class="abs" style="left:1004px;top:40px;width:6px;height:3px;border-radius:2px;background:#7f8f87"></div>
<div class="abs" style="left:1048px;top:40px;width:6px;height:3px;border-radius:2px;background:#7f8f87"></div>
<div class="abs" style="left:1224px;top:40px;width:6px;height:3px;border-radius:2px;background:#7f8f87"></div>
<!-- tray -->
<svg class="abs" style="left:1644px;top:18px;width:14px;height:10px" viewBox="0 0 14 10"><path d="M2 8 L7 3 L12 8" fill="none" stroke="#1f1f1f" stroke-width="1.4"/></svg>
<svg class="abs" style="left:1673px;top:13px;width:22px;height:22px" viewBox="0 0 22 22">
<path d="M3.5 12 C2.5 7 6 3 10.5 3 C13 3 15 4 16.5 6 M17 2.5 V6.5 H13" fill="none" stroke="#1f1f1f" stroke-width="1.3"/>
<path d="M3 15 V19 M3 15 H7 M3.5 15.5 C5 18 7 19 9 19" fill="none" stroke="#1f1f1f" stroke-width="1.3"/>
<circle cx="14.5" cy="15" r="4" fill="#0a6fd8"/>
</svg>
<div class="abs" style="left:1706px;top:13px;font-size:16px;line-height:22px;color:#1f1f1f">中</div>
<div class="abs" style="left:1744px;top:13px;font-size:16px;line-height:22px;color:#1f1f1f">拼</div>
<svg class="abs" style="left:1781px;top:13px;width:20px;height:20px" viewBox="0 0 20 20">
<path d="M13 3.5 H2.5 V14 H12" fill="none" stroke="#1f1f1f" stroke-width="1.3"/>
<path d="M5 17.5 H13 M9 14 V17.5" fill="none" stroke="#1f1f1f" stroke-width="1.3"/>
<rect x="13.6" y="2" width="3.4" height="5" rx="0.8" fill="none" stroke="#1f1f1f" stroke-width="1.1"/>
<path d="M15.3 7 V17.5 H12" fill="none" stroke="#1f1f1f" stroke-width="1.1"/>
</svg>
<svg class="abs" style="left:1806px;top:14px;width:20px;height:18px" viewBox="0 0 20 18">
<path d="M1.5 6.5 H4.5 L8.5 3 V15 L4.5 11.5 H1.5Z" fill="none" stroke="#1f1f1f" stroke-width="1.2" stroke-linejoin="round"/>
<path d="M11 6.5 C12 8 12 10 11 11.5 M13.5 4.5 C15.3 7 15.3 11 13.5 13.5 M16 3 C18.5 6.5 18.5 11.5 16 15" fill="none" stroke="#1f1f1f" stroke-width="1.1"/>
</svg>
<div class="abs" style="right:20px;top:7px;font-size:12px;line-height:16px;color:#1f1f1f;text-align:right;white-space:nowrap">12:53</div>
<div class="abs" style="right:20px;top:23px;font-size:12px;line-height:16px;color:#1f1f1f;text-align:right;white-space:nowrap">2025/12/15</div>
</div>

</body></html>
